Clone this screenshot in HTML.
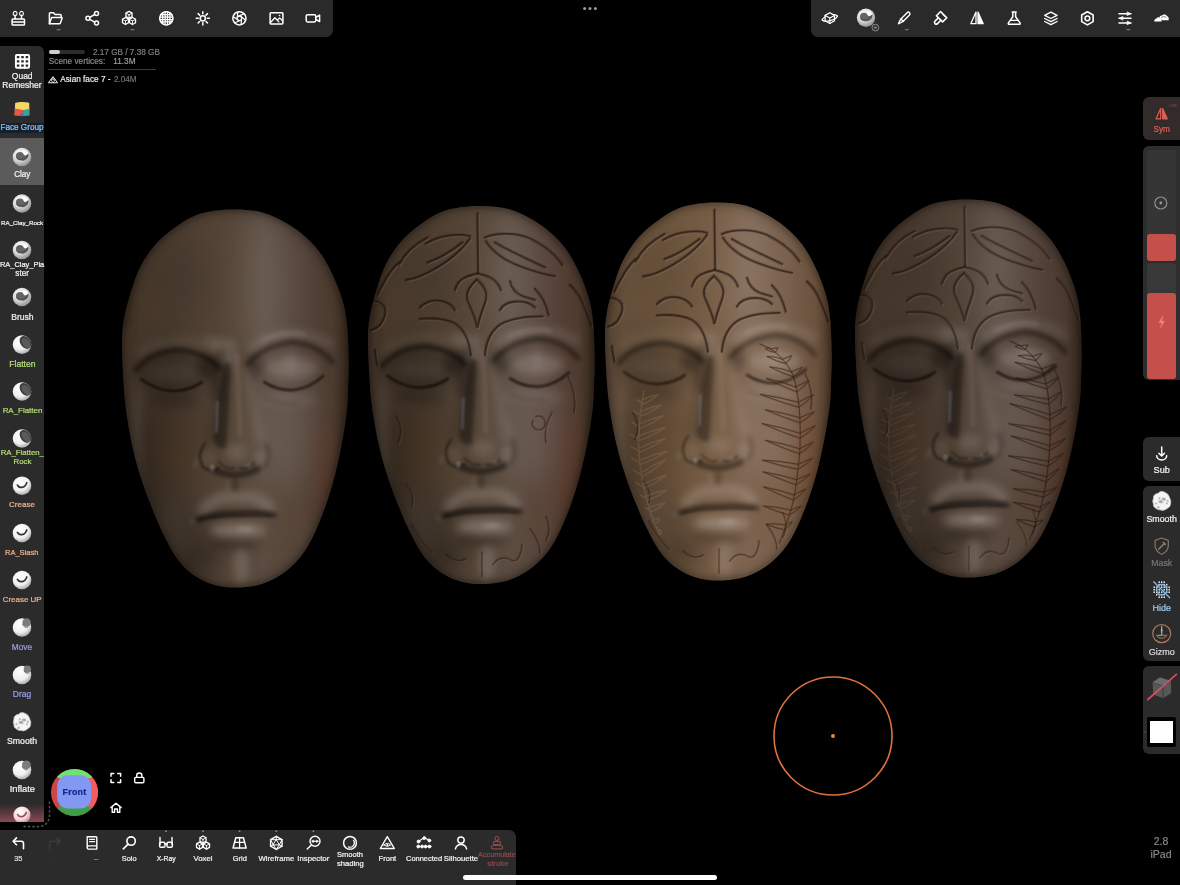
<!DOCTYPE html>
<html><head><meta charset="utf-8"><title>Nomad Sculpt</title>
<style>
html,body{margin:0;padding:0;background:#000;}
body{width:1180px;height:885px;overflow:hidden;position:relative;font-family:"Liberation Sans","DejaVu Sans",sans-serif;color:#fff;}
#scene{position:absolute;left:0;top:0;width:1180px;height:885px;}

.pn{position:absolute;background:#2b2b2b;}
.lb{position:absolute;width:120px;text-align:center;white-space:nowrap;line-height:10px;height:10px;color:#f2f2f2;-webkit-text-stroke:.22px currentColor;}
.tx{position:absolute;white-space:nowrap;line-height:10px;height:10px;-webkit-text-stroke:.15px currentColor;}
#ico{position:absolute;left:0;top:0;width:1180px;height:885px;}

</style></head><body>
<svg id="scene" width="1180" height="885" viewBox="0 0 1180 885">
<defs>
<filter id="b1" color-interpolation-filters="sRGB" filterUnits="userSpaceOnUse" x="90" y="180" width="290" height="440"><feGaussianBlur stdDeviation="1"/></filter>
<filter id="b2" color-interpolation-filters="sRGB" filterUnits="userSpaceOnUse" x="90" y="180" width="290" height="440"><feGaussianBlur stdDeviation="2"/></filter>
<filter id="b4" color-interpolation-filters="sRGB" filterUnits="userSpaceOnUse" x="90" y="180" width="290" height="440"><feGaussianBlur stdDeviation="4"/></filter>
<filter id="b8" color-interpolation-filters="sRGB" filterUnits="userSpaceOnUse" x="90" y="180" width="290" height="440"><feGaussianBlur stdDeviation="8"/></filter>
<filter id="b16" color-interpolation-filters="sRGB" filterUnits="userSpaceOnUse" x="90" y="180" width="290" height="440"><feGaussianBlur stdDeviation="16"/></filter>
<path id="fo" d="M232.5,209.5C242.9,209.3 253.3,210.1 262.5,212.5C271.7,214.9 280.0,219.4 287.5,223.8C295.0,228.1 301.7,233.3 307.5,238.8C313.3,244.2 317.9,249.4 322.5,256.2C327.1,263.1 331.5,271.9 335.0,280.0C338.5,288.1 341.7,296.7 343.8,305.0C345.8,313.3 346.7,320.0 347.5,330.0C348.3,340.0 348.7,355.0 348.8,365.0C348.8,375.0 348.3,382.5 348.0,390.0C347.7,397.5 347.9,401.7 347.0,410.0C346.1,418.3 344.5,429.2 342.5,440.0C340.5,450.8 337.9,463.8 335.0,475.0C332.1,486.2 328.8,497.1 325.0,507.5C321.2,517.9 316.7,529.2 312.5,537.5C308.3,545.8 305.0,551.5 300.0,557.5C295.0,563.5 288.8,569.4 282.5,573.8C276.2,578.1 269.6,581.5 262.5,583.8C255.4,586.0 247.5,587.2 240.0,587.5C232.5,587.8 224.6,587.4 217.5,585.8C210.4,584.1 203.8,581.4 197.5,577.5C191.2,573.6 185.2,568.8 180.0,562.5C174.8,556.2 170.6,548.3 166.2,540.0C161.9,531.7 157.7,522.1 153.8,512.5C149.8,502.9 145.8,492.5 142.5,482.5C139.2,472.5 136.2,462.9 133.8,452.5C131.2,442.1 129.1,430.4 127.5,420.0C125.9,409.6 124.9,402.5 124.0,390.0C123.1,377.5 122.0,356.7 122.0,345.0C122.0,333.3 122.4,328.3 123.8,320.0C125.1,311.7 127.3,303.8 130.0,295.0C132.7,286.2 135.8,275.8 140.0,267.5C144.2,259.2 149.2,251.7 155.0,245.0C160.8,238.3 167.5,232.7 175.0,227.5C182.5,222.3 190.4,216.8 200.0,213.8C209.6,210.8 222.1,209.7 232.5,209.5Z"/>
<clipPath id="fc"><use href="#fo"/></clipPath>
<linearGradient id="g1" gradientUnits="userSpaceOnUse" x1="122" y1="0" x2="349" y2="0"><stop offset="0" stop-color="#3b2d21"/><stop offset="0.08" stop-color="#47382b"/><stop offset="0.3" stop-color="#4e3f32"/><stop offset="0.5" stop-color="#574739"/><stop offset="0.62" stop-color="#5b4c41"/><stop offset="0.8" stop-color="#54443a"/><stop offset="0.93" stop-color="#4b3a2e"/><stop offset="1" stop-color="#3a2b20"/></linearGradient>
<linearGradient id="g2" gradientUnits="userSpaceOnUse" x1="122" y1="0" x2="349" y2="0"><stop offset="0" stop-color="#3b2d21"/><stop offset="0.08" stop-color="#493a2c"/><stop offset="0.3" stop-color="#4f4032"/><stop offset="0.5" stop-color="#58483a"/><stop offset="0.62" stop-color="#5c4d42"/><stop offset="0.8" stop-color="#57443a"/><stop offset="0.93" stop-color="#4e3a2e"/><stop offset="1" stop-color="#3a2b20"/></linearGradient>
<linearGradient id="g3" gradientUnits="userSpaceOnUse" x1="122" y1="0" x2="349" y2="0"><stop offset="0" stop-color="#544130"/><stop offset="0.08" stop-color="#66503b"/><stop offset="0.3" stop-color="#6f573f"/><stop offset="0.5" stop-color="#785f48"/><stop offset="0.62" stop-color="#7e6551"/><stop offset="0.8" stop-color="#78604c"/><stop offset="0.93" stop-color="#6b523d"/><stop offset="1" stop-color="#4e3a2a"/></linearGradient>
<linearGradient id="g4" gradientUnits="userSpaceOnUse" x1="122" y1="0" x2="349" y2="0"><stop offset="0" stop-color="#382a20"/><stop offset="0.08" stop-color="#46372b"/><stop offset="0.3" stop-color="#4b3c31"/><stop offset="0.5" stop-color="#544539"/><stop offset="0.62" stop-color="#594a40"/><stop offset="0.8" stop-color="#534339"/><stop offset="0.93" stop-color="#49392e"/><stop offset="1" stop-color="#37291f"/></linearGradient>
</defs>
<g transform="translate(0,0)"><g clip-path="url(#fc)">
<rect x="110" y="200" width="250" height="400" fill="url(#g1)"/>
<g filter="url(#b16)"><ellipse cx="266" cy="285" rx="20" ry="75" fill="#fff" opacity="0.105"/><ellipse cx="286" cy="430" rx="30" ry="60" fill="#fff" opacity="0.09"/><ellipse cx="165" cy="440" rx="30" ry="110" fill="#000" opacity="0.2"/><ellipse cx="180" cy="280" rx="30" ry="40" fill="#000" opacity="0.08"/><ellipse cx="188" cy="548" rx="36" ry="34" fill="#000" opacity="0.22"/><ellipse cx="176" cy="450" rx="18" ry="42" fill="#7a4210" opacity="0.1"/><ellipse cx="290" cy="520" rx="22" ry="40" fill="#7a4210" opacity="0.07"/></g>
<g filter="url(#b8)"><ellipse cx="148" cy="475" rx="12" ry="60" fill="#000" opacity="0.14"/><ellipse cx="176" cy="374" rx="40" ry="22" fill="#000" opacity="0.16"/><ellipse cx="200" cy="560" rx="18" ry="14" fill="#000" opacity="0.15"/><ellipse cx="325" cy="470" rx="12" ry="50" fill="#7a2a10" opacity="0.14"/><ellipse cx="172" cy="530" rx="14" ry="30" fill="#889" opacity="0.06"/></g>
<g filter="url(#b4)"><path d="M124,330 Q124,400 134,455 Q144,500 160,530" fill="none" stroke="#fff" stroke-width="7" stroke-linecap="round" stroke-linejoin="round" opacity="0.07"/><use href="#fo" fill="none" stroke="#000" stroke-width="9" opacity="0.22"/><path d="M140,352 Q175,332 214,348" fill="none" stroke="#fff" stroke-width="9" stroke-linecap="round" stroke-linejoin="round" opacity="0.06"/><path d="M252,346 Q292,322 330,344" fill="none" stroke="#fff" stroke-width="9" stroke-linecap="round" stroke-linejoin="round" opacity="0.1"/><path d="M203,336 L236,340 L232,372 Z" fill="#fff" opacity="0.13"/><ellipse cx="208" cy="366" rx="10" ry="12" fill="#000" opacity="0.35"/><ellipse cx="254" cy="366" rx="8" ry="12" fill="#000" opacity="0.28"/><ellipse cx="291" cy="362" rx="6" ry="12" fill="#fff" opacity="0.09"/><path d="M222,352 Q214,372 216,396" fill="none" stroke="#000" stroke-width="9" stroke-linecap="round" stroke-linejoin="round" opacity="0.3"/><ellipse cx="174" cy="373" rx="24" ry="9" fill="#fff" opacity="0.05"/><ellipse cx="292" cy="368" rx="26" ry="11" fill="#fff" opacity="0.16"/><ellipse cx="172" cy="401" rx="26" ry="6" fill="#000" opacity="0.12"/><ellipse cx="288" cy="400" rx="30" ry="7" fill="#fff" opacity="0.07"/><path d="M221,372 Q214,410 208,440" fill="none" stroke="#000" stroke-width="8" stroke-linecap="round" stroke-linejoin="round" opacity="0.16"/><path d="M247,372 Q253,410 262,440" fill="none" stroke="#fff" stroke-width="9" stroke-linecap="round" stroke-linejoin="round" opacity="0.08"/><ellipse cx="236" cy="452" rx="11" ry="9" fill="#fff" opacity="0.11"/><path d="M203,510 Q218,494 236,498 Q256,493 270,508" fill="none" stroke="#fff" stroke-width="11" stroke-linecap="round" stroke-linejoin="round" opacity="0.17"/><ellipse cx="238" cy="530" rx="28" ry="6.5" fill="#fff" opacity="0.24"/><ellipse cx="236" cy="545" rx="26" ry="4" fill="#000" opacity="0.28"/><ellipse cx="241" cy="566" rx="8" ry="18" fill="#fff" opacity="0.14"/><ellipse cx="137" cy="440" rx="5" ry="60" fill="#fff" opacity="0.05"/></g>
<g filter="url(#b2)"><use href="#fo" fill="none" stroke="#000" stroke-width="3" opacity="0.3"/><path d="M136,370 Q150,352 178,350 Q204,352 219,368" fill="none" stroke="#000" stroke-width="5" stroke-linecap="round" stroke-linejoin="round" opacity="0.5"/><path d="M248,364 Q262,346 292,342 Q318,344 332,362" fill="none" stroke="#000" stroke-width="5" stroke-linecap="round" stroke-linejoin="round" opacity="0.42"/><path d="M262,340.5 Q284,330 305,334.5" fill="none" stroke="#fff" stroke-width="2.6" stroke-linecap="round" stroke-linejoin="round" opacity="0.15"/><path d="M264,398 Q280,405 298,403" fill="none" stroke="#000" stroke-width="2.5" stroke-linecap="round" stroke-linejoin="round" opacity="0.18"/><path d="M224,362 Q217,400 213,440 Q216,450 226,448 Q229,410 231,364 Z" fill="#000" opacity="0.42"/><path d="M237,354 Q239,400 240,436" fill="none" stroke="#fff" stroke-width="3" stroke-linecap="round" stroke-linejoin="round" opacity="0.13"/><ellipse cx="208" cy="458" rx="7" ry="8" fill="#fff" opacity="0.05"/><ellipse cx="260" cy="457" rx="6" ry="8" fill="#fff" opacity="0.07"/><path d="M266,443 Q272,457 265,467" fill="none" stroke="#000" stroke-width="2.5" stroke-linecap="round" stroke-linejoin="round" opacity="0.28"/><path d="M214,470 Q236,480 258,469" fill="none" stroke="#000" stroke-width="6" stroke-linecap="round" stroke-linejoin="round" opacity="0.5"/><ellipse cx="235" cy="485" rx="4" ry="7" fill="#000" opacity="0.22"/><ellipse cx="228" cy="486" rx="3" ry="6" fill="#fff" opacity="0.05"/><path d="M195,520.5 Q214,513 235,513.5 Q258,511.5 274,515" fill="none" stroke="#000" stroke-width="5" stroke-linecap="round" stroke-linejoin="round" opacity="0.58"/><ellipse cx="245" cy="529" rx="9" ry="3" fill="#fff" opacity="0.12"/><ellipse cx="193.5" cy="521" rx="3" ry="2.4" fill="#fff" opacity="0.16"/><ellipse cx="196" cy="463" rx="2" ry="5" fill="#fff" opacity="0.1" transform="rotate(20 196 463)"/></g>
<g filter="url(#b1)"><path d="M141,379 Q158,392 176,391 Q191,390 202,382" fill="none" stroke="#000" stroke-width="2.2" stroke-linecap="round" stroke-linejoin="round" opacity="0.75"/><path d="M264,382 Q278,391 294,390 Q310,388 323,376" fill="none" stroke="#000" stroke-width="2.2" stroke-linecap="round" stroke-linejoin="round" opacity="0.75"/><path d="M217.5,402 L216.5,432" fill="none" stroke="#93a4cc" stroke-width="2.2" stroke-linecap="round" stroke-linejoin="round" opacity="0.32"/><path d="M205,443 Q196,455 203,467 Q210,473 219,468" fill="none" stroke="#000" stroke-width="2.2" stroke-linecap="round" stroke-linejoin="round" opacity="0.42"/><path d="M219,462 Q226,470 234,468 M240,468 Q248,470 254,463" fill="none" stroke="#000" stroke-width="2.5" stroke-linecap="round" stroke-linejoin="round" opacity="0.35"/><ellipse cx="212.5" cy="468" rx="2.4" ry="3.4" fill="#fff" opacity="0.22"/><ellipse cx="249" cy="466" rx="2.4" ry="2.6" fill="#fff" opacity="0.1"/><path d="M199,520 Q216,516 235,516 Q256,515 270,516" fill="none" stroke="#000" stroke-width="2" stroke-linecap="round" stroke-linejoin="round" opacity="0.35"/></g>
</g></g>
<g transform="translate(246,-3.5)"><g clip-path="url(#fc)">
<rect x="110" y="200" width="250" height="400" fill="url(#g2)"/>
<g filter="url(#b16)"><ellipse cx="266" cy="285" rx="20" ry="75" fill="#fff" opacity="0.105"/><ellipse cx="286" cy="430" rx="30" ry="60" fill="#fff" opacity="0.09"/><ellipse cx="165" cy="440" rx="30" ry="110" fill="#000" opacity="0.2"/><ellipse cx="180" cy="280" rx="30" ry="40" fill="#000" opacity="0.08"/><ellipse cx="188" cy="548" rx="36" ry="34" fill="#000" opacity="0.22"/><ellipse cx="176" cy="450" rx="18" ry="42" fill="#7a4210" opacity="0.1"/><ellipse cx="290" cy="520" rx="22" ry="40" fill="#7a4210" opacity="0.07"/></g>
<g filter="url(#b8)"><ellipse cx="148" cy="475" rx="12" ry="60" fill="#000" opacity="0.14"/><ellipse cx="176" cy="374" rx="40" ry="22" fill="#000" opacity="0.16"/><ellipse cx="200" cy="560" rx="18" ry="14" fill="#000" opacity="0.15"/><ellipse cx="325" cy="470" rx="12" ry="50" fill="#7a2a10" opacity="0.14"/><ellipse cx="172" cy="530" rx="14" ry="30" fill="#889" opacity="0.06"/></g>
<g filter="url(#b4)"><path d="M124,330 Q124,400 134,455 Q144,500 160,530" fill="none" stroke="#fff" stroke-width="7" stroke-linecap="round" stroke-linejoin="round" opacity="0.07"/><use href="#fo" fill="none" stroke="#000" stroke-width="9" opacity="0.22"/><path d="M140,352 Q175,332 214,348" fill="none" stroke="#fff" stroke-width="9" stroke-linecap="round" stroke-linejoin="round" opacity="0.06"/><path d="M252,346 Q292,322 330,344" fill="none" stroke="#fff" stroke-width="9" stroke-linecap="round" stroke-linejoin="round" opacity="0.1"/><path d="M203,336 L236,340 L232,372 Z" fill="#fff" opacity="0.13"/><ellipse cx="208" cy="366" rx="10" ry="12" fill="#000" opacity="0.35"/><ellipse cx="254" cy="366" rx="8" ry="12" fill="#000" opacity="0.28"/><ellipse cx="291" cy="362" rx="6" ry="12" fill="#fff" opacity="0.09"/><path d="M222,352 Q214,372 216,396" fill="none" stroke="#000" stroke-width="9" stroke-linecap="round" stroke-linejoin="round" opacity="0.3"/><ellipse cx="174" cy="373" rx="24" ry="9" fill="#fff" opacity="0.05"/><ellipse cx="292" cy="368" rx="26" ry="11" fill="#fff" opacity="0.16"/><ellipse cx="172" cy="401" rx="26" ry="6" fill="#000" opacity="0.12"/><ellipse cx="288" cy="400" rx="30" ry="7" fill="#fff" opacity="0.07"/><path d="M221,372 Q214,410 208,440" fill="none" stroke="#000" stroke-width="8" stroke-linecap="round" stroke-linejoin="round" opacity="0.16"/><path d="M247,372 Q253,410 262,440" fill="none" stroke="#fff" stroke-width="9" stroke-linecap="round" stroke-linejoin="round" opacity="0.08"/><ellipse cx="236" cy="452" rx="11" ry="9" fill="#fff" opacity="0.11"/><path d="M203,510 Q218,494 236,498 Q256,493 270,508" fill="none" stroke="#fff" stroke-width="11" stroke-linecap="round" stroke-linejoin="round" opacity="0.17"/><ellipse cx="238" cy="530" rx="28" ry="6.5" fill="#fff" opacity="0.24"/><ellipse cx="236" cy="545" rx="26" ry="4" fill="#000" opacity="0.28"/><ellipse cx="241" cy="566" rx="8" ry="18" fill="#fff" opacity="0.14"/><ellipse cx="137" cy="440" rx="5" ry="60" fill="#fff" opacity="0.05"/></g>
<g filter="url(#b2)"><use href="#fo" fill="none" stroke="#000" stroke-width="3" opacity="0.3"/><path d="M136,370 Q150,352 178,350 Q204,352 219,368" fill="none" stroke="#000" stroke-width="5" stroke-linecap="round" stroke-linejoin="round" opacity="0.5"/><path d="M248,364 Q262,346 292,342 Q318,344 332,362" fill="none" stroke="#000" stroke-width="5" stroke-linecap="round" stroke-linejoin="round" opacity="0.42"/><path d="M262,340.5 Q284,330 305,334.5" fill="none" stroke="#fff" stroke-width="2.6" stroke-linecap="round" stroke-linejoin="round" opacity="0.15"/><path d="M264,398 Q280,405 298,403" fill="none" stroke="#000" stroke-width="2.5" stroke-linecap="round" stroke-linejoin="round" opacity="0.18"/><path d="M224,362 Q217,400 213,440 Q216,450 226,448 Q229,410 231,364 Z" fill="#000" opacity="0.42"/><path d="M237,354 Q239,400 240,436" fill="none" stroke="#fff" stroke-width="3" stroke-linecap="round" stroke-linejoin="round" opacity="0.13"/><ellipse cx="208" cy="458" rx="7" ry="8" fill="#fff" opacity="0.05"/><ellipse cx="260" cy="457" rx="6" ry="8" fill="#fff" opacity="0.07"/><path d="M266,443 Q272,457 265,467" fill="none" stroke="#000" stroke-width="2.5" stroke-linecap="round" stroke-linejoin="round" opacity="0.28"/><path d="M214,470 Q236,480 258,469" fill="none" stroke="#000" stroke-width="6" stroke-linecap="round" stroke-linejoin="round" opacity="0.5"/><ellipse cx="235" cy="485" rx="4" ry="7" fill="#000" opacity="0.22"/><ellipse cx="228" cy="486" rx="3" ry="6" fill="#fff" opacity="0.05"/><path d="M195,520.5 Q214,513 235,513.5 Q258,511.5 274,515" fill="none" stroke="#000" stroke-width="5" stroke-linecap="round" stroke-linejoin="round" opacity="0.58"/><ellipse cx="245" cy="529" rx="9" ry="3" fill="#fff" opacity="0.12"/><ellipse cx="193.5" cy="521" rx="3" ry="2.4" fill="#fff" opacity="0.16"/><ellipse cx="196" cy="463" rx="2" ry="5" fill="#fff" opacity="0.1" transform="rotate(20 196 463)"/></g>
<g filter="url(#b1)"><path d="M141,379 Q158,392 176,391 Q191,390 202,382" fill="none" stroke="#000" stroke-width="2.2" stroke-linecap="round" stroke-linejoin="round" opacity="0.75"/><path d="M264,382 Q278,391 294,390 Q310,388 323,376" fill="none" stroke="#000" stroke-width="2.2" stroke-linecap="round" stroke-linejoin="round" opacity="0.75"/><path d="M217.5,402 L216.5,432" fill="none" stroke="#93a4cc" stroke-width="2.2" stroke-linecap="round" stroke-linejoin="round" opacity="0.32"/><path d="M205,443 Q196,455 203,467 Q210,473 219,468" fill="none" stroke="#000" stroke-width="2.2" stroke-linecap="round" stroke-linejoin="round" opacity="0.42"/><path d="M219,462 Q226,470 234,468 M240,468 Q248,470 254,463" fill="none" stroke="#000" stroke-width="2.5" stroke-linecap="round" stroke-linejoin="round" opacity="0.35"/><ellipse cx="212.5" cy="468" rx="2.4" ry="3.4" fill="#fff" opacity="0.22"/><ellipse cx="249" cy="466" rx="2.4" ry="2.6" fill="#fff" opacity="0.1"/><path d="M199,520 Q216,516 235,516 Q256,515 270,516" fill="none" stroke="#000" stroke-width="2" stroke-linecap="round" stroke-linejoin="round" opacity="0.35"/></g>
<path d="M231.5,217 L232.2,276" fill="none" stroke="#fff" stroke-width="1.8" opacity="0.1" transform="translate(1.3,1.3)" stroke-linecap="round"/><path d="M231.5,217 L232.2,276" fill="none" stroke="#1a0d05" stroke-width="3.78" opacity="0.193" stroke-linecap="round"/><path d="M231.5,217 L232.2,276" fill="none" stroke="#1a0d05" stroke-width="1.8" opacity="0.55" stroke-linecap="round"/>
<path d="M231,283 C224,289 219.5,296 221.5,303 C224,311 229,318 231.5,331 C234,318 238,311 240,303 C242,296 238,289 231,283 Z" fill="none" stroke="#fff" stroke-width="1.8" opacity="0.1" transform="translate(1.3,1.3)" stroke-linecap="round"/><path d="M231,283 C224,289 219.5,296 221.5,303 C224,311 229,318 231.5,331 C234,318 238,311 240,303 C242,296 238,289 231,283 Z" fill="none" stroke="#1a0d05" stroke-width="3.78" opacity="0.193" stroke-linecap="round"/><path d="M231,283 C224,289 219.5,296 221.5,303 C224,311 229,318 231.5,331 C234,318 238,311 240,303 C242,296 238,289 231,283 Z" fill="none" stroke="#1a0d05" stroke-width="1.8" opacity="0.55" stroke-linecap="round"/>
<path d="M209,293.5 C211,287 214,283.5 218,281.5 C223,279 227,278 231.5,277 C236,278 240,279 245,281.5 C249,283.5 253,288 255,293.5" fill="none" stroke="#fff" stroke-width="1.8" opacity="0.1" transform="translate(1.3,1.3)" stroke-linecap="round"/><path d="M209,293.5 C211,287 214,283.5 218,281.5 C223,279 227,278 231.5,277 C236,278 240,279 245,281.5 C249,283.5 253,288 255,293.5" fill="none" stroke="#1a0d05" stroke-width="3.78" opacity="0.193" stroke-linecap="round"/><path d="M209,293.5 C211,287 214,283.5 218,281.5 C223,279 227,278 231.5,277 C236,278 240,279 245,281.5 C249,283.5 253,288 255,293.5" fill="none" stroke="#1a0d05" stroke-width="1.8" opacity="0.55" stroke-linecap="round"/>
<path d="M224,239.8 C216,237.5 196,237 180,247" fill="none" stroke="#fff" stroke-width="1.8" opacity="0.1" transform="translate(1.3,1.3)" stroke-linecap="round"/><path d="M224,239.8 C216,237.5 196,237 180,247" fill="none" stroke="#1a0d05" stroke-width="3.78" opacity="0.193" stroke-linecap="round"/><path d="M224,239.8 C216,237.5 196,237 180,247" fill="none" stroke="#1a0d05" stroke-width="1.8" opacity="0.55" stroke-linecap="round"/>
<path d="M224,242 C214,256 196,270 174,279.8 C169,282 164,283 160,283.5" fill="none" stroke="#fff" stroke-width="1.8" opacity="0.1" transform="translate(1.3,1.3)" stroke-linecap="round"/><path d="M224,242 C214,256 196,270 174,279.8 C169,282 164,283 160,283.5" fill="none" stroke="#1a0d05" stroke-width="3.78" opacity="0.193" stroke-linecap="round"/><path d="M224,242 C214,256 196,270 174,279.8 C169,282 164,283 160,283.5" fill="none" stroke="#1a0d05" stroke-width="1.8" opacity="0.55" stroke-linecap="round"/>
<path d="M216.5,246 C206,254 194,262 181.5,266" fill="none" stroke="#fff" stroke-width="1.8" opacity="0.1" transform="translate(1.3,1.3)" stroke-linecap="round"/><path d="M216.5,246 C206,254 194,262 181.5,266" fill="none" stroke="#1a0d05" stroke-width="3.78" opacity="0.193" stroke-linecap="round"/><path d="M216.5,246 C206,254 194,262 181.5,266" fill="none" stroke="#1a0d05" stroke-width="1.8" opacity="0.55" stroke-linecap="round"/>
<path d="M181.5,241 C168,248 158,258 152.8,268.5" fill="none" stroke="#fff" stroke-width="1.8" opacity="0.1" transform="translate(1.3,1.3)" stroke-linecap="round"/><path d="M181.5,241 C168,248 158,258 152.8,268.5" fill="none" stroke="#1a0d05" stroke-width="3.78" opacity="0.193" stroke-linecap="round"/><path d="M181.5,241 C168,248 158,258 152.8,268.5" fill="none" stroke="#1a0d05" stroke-width="1.8" opacity="0.55" stroke-linecap="round"/>
<path d="M239,241 C250,236 270,236 284,242 C296,248 310,258 316.5,268.5" fill="none" stroke="#fff" stroke-width="1.8" opacity="0.1" transform="translate(1.3,1.3)" stroke-linecap="round"/><path d="M239,241 C250,236 270,236 284,242 C296,248 310,258 316.5,268.5" fill="none" stroke="#1a0d05" stroke-width="3.78" opacity="0.193" stroke-linecap="round"/><path d="M239,241 C250,236 270,236 284,242 C296,248 310,258 316.5,268.5" fill="none" stroke="#1a0d05" stroke-width="1.8" opacity="0.55" stroke-linecap="round"/>
<path d="M240,244.8 C246,254 258,264 274,269.8 C288,275 300,278.5 309,279.8" fill="none" stroke="#fff" stroke-width="1.8" opacity="0.1" transform="translate(1.3,1.3)" stroke-linecap="round"/><path d="M240,244.8 C246,254 258,264 274,269.8 C288,275 300,278.5 309,279.8" fill="none" stroke="#1a0d05" stroke-width="3.78" opacity="0.193" stroke-linecap="round"/><path d="M240,244.8 C246,254 258,264 274,269.8 C288,275 300,278.5 309,279.8" fill="none" stroke="#1a0d05" stroke-width="1.8" opacity="0.55" stroke-linecap="round"/>
<path d="M249,246 C258,252 276,260 299,271" fill="none" stroke="#fff" stroke-width="1.8" opacity="0.1" transform="translate(1.3,1.3)" stroke-linecap="round"/><path d="M249,246 C258,252 276,260 299,271" fill="none" stroke="#1a0d05" stroke-width="3.78" opacity="0.193" stroke-linecap="round"/><path d="M249,246 C258,252 276,260 299,271" fill="none" stroke="#1a0d05" stroke-width="1.8" opacity="0.55" stroke-linecap="round"/>
<path d="M174,311 C178,306 186,303 195,304.5 C202,306 207,309.5 209,313.5" fill="none" stroke="#fff" stroke-width="1.8" opacity="0.1" transform="translate(1.3,1.3)" stroke-linecap="round"/><path d="M174,311 C178,306 186,303 195,304.5 C202,306 207,309.5 209,313.5" fill="none" stroke="#1a0d05" stroke-width="3.78" opacity="0.193" stroke-linecap="round"/><path d="M174,311 C178,306 186,303 195,304.5 C202,306 207,309.5 209,313.5" fill="none" stroke="#1a0d05" stroke-width="1.8" opacity="0.55" stroke-linecap="round"/>
<path d="M254,313.5 C257,308 264,305 272,305 C280,305 286,308 289,311" fill="none" stroke="#fff" stroke-width="1.8" opacity="0.1" transform="translate(1.3,1.3)" stroke-linecap="round"/><path d="M254,313.5 C257,308 264,305 272,305 C280,305 286,308 289,311" fill="none" stroke="#1a0d05" stroke-width="3.78" opacity="0.193" stroke-linecap="round"/><path d="M254,313.5 C257,308 264,305 272,305 C280,305 286,308 289,311" fill="none" stroke="#1a0d05" stroke-width="1.8" opacity="0.55" stroke-linecap="round"/>
<path d="M174,322.3 C186,321.5 200,322.5 209,327 C218,332.5 223,342 225,358.5" fill="none" stroke="#fff" stroke-width="1.8" opacity="0.1" transform="translate(1.3,1.3)" stroke-linecap="round"/><path d="M174,322.3 C186,321.5 200,322.5 209,327 C218,332.5 223,342 225,358.5" fill="none" stroke="#1a0d05" stroke-width="3.78" opacity="0.193" stroke-linecap="round"/><path d="M174,322.3 C186,321.5 200,322.5 209,327 C218,332.5 223,342 225,358.5" fill="none" stroke="#1a0d05" stroke-width="1.8" opacity="0.55" stroke-linecap="round"/>
<path d="M239,358.5 C240,345 245,334 255,327.5 C266,321.5 282,319.8 296.5,319.8" fill="none" stroke="#fff" stroke-width="1.8" opacity="0.1" transform="translate(1.3,1.3)" stroke-linecap="round"/><path d="M239,358.5 C240,345 245,334 255,327.5 C266,321.5 282,319.8 296.5,319.8" fill="none" stroke="#1a0d05" stroke-width="3.78" opacity="0.193" stroke-linecap="round"/><path d="M239,358.5 C240,345 245,334 255,327.5 C266,321.5 282,319.8 296.5,319.8" fill="none" stroke="#1a0d05" stroke-width="1.8" opacity="0.55" stroke-linecap="round"/>
<path d="M264,284.8 C266,292 270,297 276,299.5 C281,301.5 286,302.5 289,303.5" fill="none" stroke="#fff" stroke-width="1.8" opacity="0.1" transform="translate(1.3,1.3)" stroke-linecap="round"/><path d="M264,284.8 C266,292 270,297 276,299.5 C281,301.5 286,302.5 289,303.5" fill="none" stroke="#1a0d05" stroke-width="3.78" opacity="0.193" stroke-linecap="round"/><path d="M264,284.8 C266,292 270,297 276,299.5 C281,301.5 286,302.5 289,303.5" fill="none" stroke="#1a0d05" stroke-width="1.8" opacity="0.55" stroke-linecap="round"/>
<path d="M289,292.3 C295,298 300,306 302.8,318.5" fill="none" stroke="#fff" stroke-width="1.8" opacity="0.1" transform="translate(1.3,1.3)" stroke-linecap="round"/><path d="M289,292.3 C295,298 300,306 302.8,318.5" fill="none" stroke="#1a0d05" stroke-width="3.78" opacity="0.193" stroke-linecap="round"/><path d="M289,292.3 C295,298 300,306 302.8,318.5" fill="none" stroke="#1a0d05" stroke-width="1.8" opacity="0.55" stroke-linecap="round"/>
<path d="M152.8,266 C147,271 142,278 138,286 C135,291 133,295 131.5,298.5" fill="none" stroke="#fff" stroke-width="1.8" opacity="0.1" transform="translate(1.3,1.3)" stroke-linecap="round"/><path d="M152.8,266 C147,271 142,278 138,286 C135,291 133,295 131.5,298.5" fill="none" stroke="#1a0d05" stroke-width="3.78" opacity="0.193" stroke-linecap="round"/><path d="M152.8,266 C147,271 142,278 138,286 C135,291 133,295 131.5,298.5" fill="none" stroke="#1a0d05" stroke-width="1.8" opacity="0.55" stroke-linecap="round"/>
<path d="M126.5,304.8 C132,305 137,307.5 139,311 C140.5,317 138,323 134,328.5 C131,331.5 128,333 125.3,333.5" fill="none" stroke="#fff" stroke-width="1.8" opacity="0.1" transform="translate(1.3,1.3)" stroke-linecap="round"/><path d="M126.5,304.8 C132,305 137,307.5 139,311 C140.5,317 138,323 134,328.5 C131,331.5 128,333 125.3,333.5" fill="none" stroke="#1a0d05" stroke-width="3.78" opacity="0.193" stroke-linecap="round"/><path d="M126.5,304.8 C132,305 137,307.5 139,311 C140.5,317 138,323 134,328.5 C131,331.5 128,333 125.3,333.5" fill="none" stroke="#1a0d05" stroke-width="1.8" opacity="0.55" stroke-linecap="round"/>
<path d="M324,288.5 C330,294 334,300 336.5,306 C340,314 343,321 345.3,328.5" fill="none" stroke="#fff" stroke-width="1.8" opacity="0.1" transform="translate(1.3,1.3)" stroke-linecap="round"/><path d="M324,288.5 C330,294 334,300 336.5,306 C340,314 343,321 345.3,328.5" fill="none" stroke="#1a0d05" stroke-width="3.78" opacity="0.193" stroke-linecap="round"/><path d="M324,288.5 C330,294 334,300 336.5,306 C340,314 343,321 345.3,328.5" fill="none" stroke="#1a0d05" stroke-width="1.8" opacity="0.55" stroke-linecap="round"/>
<path d="M129,353.5 C129.5,359 130.5,364 131.5,368.5" fill="none" stroke="#fff" stroke-width="1.8" opacity="0.1" transform="translate(1.3,1.3)" stroke-linecap="round"/><path d="M129,353.5 C129.5,359 130.5,364 131.5,368.5" fill="none" stroke="#1a0d05" stroke-width="3.78" opacity="0.193" stroke-linecap="round"/><path d="M129,353.5 C129.5,359 130.5,364 131.5,368.5" fill="none" stroke="#1a0d05" stroke-width="1.8" opacity="0.55" stroke-linecap="round"/>
<path d="M290,420 C298,418 302,426 297,432 C291,436 284,430 287,424" fill="none" stroke="#fff" stroke-width="1.3" opacity="0.06" transform="translate(1.3,1.3)" stroke-linecap="round"/><path d="M290,420 C298,418 302,426 297,432 C291,436 284,430 287,424" fill="none" stroke="#1a0d05" stroke-width="2.73" opacity="0.115" stroke-linecap="round"/><path d="M290,420 C298,418 302,426 297,432 C291,436 284,430 287,424" fill="none" stroke="#1a0d05" stroke-width="1.3" opacity="0.33" stroke-linecap="round"/>
<path d="M306,416 C300,426 298,436 300,446" fill="none" stroke="#fff" stroke-width="1.3" opacity="0.06" transform="translate(1.3,1.3)" stroke-linecap="round"/><path d="M306,416 C300,426 298,436 300,446" fill="none" stroke="#1a0d05" stroke-width="2.73" opacity="0.115" stroke-linecap="round"/><path d="M306,416 C300,426 298,436 300,446" fill="none" stroke="#1a0d05" stroke-width="1.3" opacity="0.33" stroke-linecap="round"/>
<path d="M236,556 L236,580" fill="none" stroke="#fff" stroke-width="1.3" opacity="0.06" transform="translate(1.3,1.3)" stroke-linecap="round"/><path d="M236,556 L236,580" fill="none" stroke="#1a0d05" stroke-width="2.73" opacity="0.115" stroke-linecap="round"/><path d="M236,556 L236,580" fill="none" stroke="#1a0d05" stroke-width="1.3" opacity="0.33" stroke-linecap="round"/>
<path d="M247,568 C252,560 260,560 266,564 C272,566 276,556 276,548" fill="none" stroke="#fff" stroke-width="1.3" opacity="0.06" transform="translate(1.3,1.3)" stroke-linecap="round"/><path d="M247,568 C252,560 260,560 266,564 C272,566 276,556 276,548" fill="none" stroke="#1a0d05" stroke-width="2.73" opacity="0.115" stroke-linecap="round"/><path d="M247,568 C252,560 260,560 266,564 C272,566 276,556 276,548" fill="none" stroke="#1a0d05" stroke-width="1.3" opacity="0.33" stroke-linecap="round"/>
<path d="M200,558 C206,564 214,566 220,562" fill="none" stroke="#fff" stroke-width="1.3" opacity="0.06" transform="translate(1.3,1.3)" stroke-linecap="round"/><path d="M200,558 C206,564 214,566 220,562" fill="none" stroke="#1a0d05" stroke-width="2.73" opacity="0.115" stroke-linecap="round"/><path d="M200,558 C206,564 214,566 220,562" fill="none" stroke="#1a0d05" stroke-width="1.3" opacity="0.33" stroke-linecap="round"/>
<path d="M160,488 C166,494 168,502 166,510" fill="none" stroke="#fff" stroke-width="1.3" opacity="0.06" transform="translate(1.3,1.3)" stroke-linecap="round"/><path d="M160,488 C166,494 168,502 166,510" fill="none" stroke="#1a0d05" stroke-width="2.73" opacity="0.115" stroke-linecap="round"/><path d="M160,488 C166,494 168,502 166,510" fill="none" stroke="#1a0d05" stroke-width="1.3" opacity="0.33" stroke-linecap="round"/>
<path d="M166,528 C172,540 180,550 186,556" fill="none" stroke="#fff" stroke-width="1.3" opacity="0.06" transform="translate(1.3,1.3)" stroke-linecap="round"/><path d="M166,528 C172,540 180,550 186,556" fill="none" stroke="#1a0d05" stroke-width="2.73" opacity="0.115" stroke-linecap="round"/><path d="M166,528 C172,540 180,550 186,556" fill="none" stroke="#1a0d05" stroke-width="1.3" opacity="0.33" stroke-linecap="round"/>
<path d="M284,532 C290,540 294,548 294,556" fill="none" stroke="#fff" stroke-width="1.3" opacity="0.06" transform="translate(1.3,1.3)" stroke-linecap="round"/><path d="M284,532 C290,540 294,548 294,556" fill="none" stroke="#1a0d05" stroke-width="2.73" opacity="0.115" stroke-linecap="round"/><path d="M284,532 C290,540 294,548 294,556" fill="none" stroke="#1a0d05" stroke-width="1.3" opacity="0.33" stroke-linecap="round"/>
<path d="M300,520 C304,528 304,536 300,544" fill="none" stroke="#fff" stroke-width="1.3" opacity="0.06" transform="translate(1.3,1.3)" stroke-linecap="round"/><path d="M300,520 C304,528 304,536 300,544" fill="none" stroke="#1a0d05" stroke-width="2.73" opacity="0.115" stroke-linecap="round"/><path d="M300,520 C304,528 304,536 300,544" fill="none" stroke="#1a0d05" stroke-width="1.3" opacity="0.33" stroke-linecap="round"/>
<path d="M150,420 C156,428 156,438 152,446" fill="none" stroke="#fff" stroke-width="1.3" opacity="0.06" transform="translate(1.3,1.3)" stroke-linecap="round"/><path d="M150,420 C156,428 156,438 152,446" fill="none" stroke="#1a0d05" stroke-width="2.73" opacity="0.115" stroke-linecap="round"/><path d="M150,420 C156,428 156,438 152,446" fill="none" stroke="#1a0d05" stroke-width="1.3" opacity="0.33" stroke-linecap="round"/>
<path d="M322,380 C328,392 330,404 328,416" fill="none" stroke="#fff" stroke-width="1.3" opacity="0.06" transform="translate(1.3,1.3)" stroke-linecap="round"/><path d="M322,380 C328,392 330,404 328,416" fill="none" stroke="#1a0d05" stroke-width="2.73" opacity="0.115" stroke-linecap="round"/><path d="M322,380 C328,392 330,404 328,416" fill="none" stroke="#1a0d05" stroke-width="1.3" opacity="0.33" stroke-linecap="round"/>
</g></g>
<g transform="translate(483,-7)"><g clip-path="url(#fc)">
<rect x="110" y="200" width="250" height="400" fill="url(#g3)"/>
<g filter="url(#b16)"><ellipse cx="266" cy="285" rx="20" ry="75" fill="#fff" opacity="0.105"/><ellipse cx="286" cy="430" rx="30" ry="60" fill="#fff" opacity="0.09"/><ellipse cx="165" cy="440" rx="30" ry="110" fill="#000" opacity="0.17"/><ellipse cx="180" cy="280" rx="30" ry="40" fill="#000" opacity="0.068"/><ellipse cx="188" cy="548" rx="36" ry="34" fill="#000" opacity="0.187"/><ellipse cx="176" cy="450" rx="18" ry="42" fill="#7a4210" opacity="0.1"/><ellipse cx="290" cy="520" rx="22" ry="40" fill="#7a4210" opacity="0.07"/></g>
<g filter="url(#b8)"><ellipse cx="148" cy="475" rx="12" ry="60" fill="#000" opacity="0.119"/><ellipse cx="176" cy="374" rx="40" ry="22" fill="#000" opacity="0.136"/><ellipse cx="200" cy="560" rx="18" ry="14" fill="#000" opacity="0.128"/><ellipse cx="325" cy="470" rx="12" ry="50" fill="#7a2a10" opacity="0.14"/><ellipse cx="172" cy="530" rx="14" ry="30" fill="#889" opacity="0.06"/></g>
<g filter="url(#b4)"><path d="M124,330 Q124,400 134,455 Q144,500 160,530" fill="none" stroke="#fff" stroke-width="7" stroke-linecap="round" stroke-linejoin="round" opacity="0.07"/><use href="#fo" fill="none" stroke="#000" stroke-width="9" opacity="0.187"/><path d="M140,352 Q175,332 214,348" fill="none" stroke="#fff" stroke-width="9" stroke-linecap="round" stroke-linejoin="round" opacity="0.06"/><path d="M252,346 Q292,322 330,344" fill="none" stroke="#fff" stroke-width="9" stroke-linecap="round" stroke-linejoin="round" opacity="0.1"/><path d="M203,336 L236,340 L232,372 Z" fill="#fff" opacity="0.13"/><ellipse cx="208" cy="366" rx="10" ry="12" fill="#000" opacity="0.297"/><ellipse cx="254" cy="366" rx="8" ry="12" fill="#000" opacity="0.238"/><ellipse cx="291" cy="362" rx="6" ry="12" fill="#fff" opacity="0.09"/><path d="M222,352 Q214,372 216,396" fill="none" stroke="#000" stroke-width="9" stroke-linecap="round" stroke-linejoin="round" opacity="0.255"/><ellipse cx="174" cy="373" rx="24" ry="9" fill="#fff" opacity="0.05"/><ellipse cx="292" cy="368" rx="26" ry="11" fill="#fff" opacity="0.16"/><ellipse cx="172" cy="401" rx="26" ry="6" fill="#000" opacity="0.102"/><ellipse cx="288" cy="400" rx="30" ry="7" fill="#fff" opacity="0.07"/><path d="M221,372 Q214,410 208,440" fill="none" stroke="#000" stroke-width="8" stroke-linecap="round" stroke-linejoin="round" opacity="0.136"/><path d="M247,372 Q253,410 262,440" fill="none" stroke="#fff" stroke-width="9" stroke-linecap="round" stroke-linejoin="round" opacity="0.08"/><ellipse cx="236" cy="452" rx="11" ry="9" fill="#fff" opacity="0.11"/><path d="M203,510 Q218,494 236,498 Q256,493 270,508" fill="none" stroke="#fff" stroke-width="11" stroke-linecap="round" stroke-linejoin="round" opacity="0.17"/><ellipse cx="238" cy="530" rx="28" ry="6.5" fill="#fff" opacity="0.24"/><ellipse cx="236" cy="545" rx="26" ry="4" fill="#000" opacity="0.238"/><ellipse cx="241" cy="566" rx="8" ry="18" fill="#fff" opacity="0.14"/><ellipse cx="137" cy="440" rx="5" ry="60" fill="#fff" opacity="0.05"/></g>
<g filter="url(#b2)"><use href="#fo" fill="none" stroke="#000" stroke-width="3" opacity="0.255"/><path d="M136,370 Q150,352 178,350 Q204,352 219,368" fill="none" stroke="#000" stroke-width="5" stroke-linecap="round" stroke-linejoin="round" opacity="0.425"/><path d="M248,364 Q262,346 292,342 Q318,344 332,362" fill="none" stroke="#000" stroke-width="5" stroke-linecap="round" stroke-linejoin="round" opacity="0.357"/><path d="M262,340.5 Q284,330 305,334.5" fill="none" stroke="#fff" stroke-width="2.6" stroke-linecap="round" stroke-linejoin="round" opacity="0.15"/><path d="M264,398 Q280,405 298,403" fill="none" stroke="#000" stroke-width="2.5" stroke-linecap="round" stroke-linejoin="round" opacity="0.153"/><path d="M224,362 Q217,400 213,440 Q216,450 226,448 Q229,410 231,364 Z" fill="#000" opacity="0.357"/><path d="M237,354 Q239,400 240,436" fill="none" stroke="#fff" stroke-width="3" stroke-linecap="round" stroke-linejoin="round" opacity="0.13"/><ellipse cx="208" cy="458" rx="7" ry="8" fill="#fff" opacity="0.05"/><ellipse cx="260" cy="457" rx="6" ry="8" fill="#fff" opacity="0.07"/><path d="M266,443 Q272,457 265,467" fill="none" stroke="#000" stroke-width="2.5" stroke-linecap="round" stroke-linejoin="round" opacity="0.238"/><path d="M214,470 Q236,480 258,469" fill="none" stroke="#000" stroke-width="6" stroke-linecap="round" stroke-linejoin="round" opacity="0.425"/><ellipse cx="235" cy="485" rx="4" ry="7" fill="#000" opacity="0.187"/><ellipse cx="228" cy="486" rx="3" ry="6" fill="#fff" opacity="0.05"/><path d="M195,520.5 Q214,513 235,513.5 Q258,511.5 274,515" fill="none" stroke="#000" stroke-width="5" stroke-linecap="round" stroke-linejoin="round" opacity="0.493"/><ellipse cx="245" cy="529" rx="9" ry="3" fill="#fff" opacity="0.12"/><ellipse cx="193.5" cy="521" rx="3" ry="2.4" fill="#fff" opacity="0.16"/><ellipse cx="196" cy="463" rx="2" ry="5" fill="#fff" opacity="0.1" transform="rotate(20 196 463)"/></g>
<g filter="url(#b1)"><path d="M141,379 Q158,392 176,391 Q191,390 202,382" fill="none" stroke="#000" stroke-width="2.2" stroke-linecap="round" stroke-linejoin="round" opacity="0.637"/><path d="M264,382 Q278,391 294,390 Q310,388 323,376" fill="none" stroke="#000" stroke-width="2.2" stroke-linecap="round" stroke-linejoin="round" opacity="0.637"/><path d="M217.5,402 L216.5,432" fill="none" stroke="#93a4cc" stroke-width="2.2" stroke-linecap="round" stroke-linejoin="round" opacity="0.32"/><path d="M205,443 Q196,455 203,467 Q210,473 219,468" fill="none" stroke="#000" stroke-width="2.2" stroke-linecap="round" stroke-linejoin="round" opacity="0.357"/><path d="M219,462 Q226,470 234,468 M240,468 Q248,470 254,463" fill="none" stroke="#000" stroke-width="2.5" stroke-linecap="round" stroke-linejoin="round" opacity="0.297"/><ellipse cx="212.5" cy="468" rx="2.4" ry="3.4" fill="#fff" opacity="0.22"/><ellipse cx="249" cy="466" rx="2.4" ry="2.6" fill="#fff" opacity="0.1"/><path d="M199,520 Q216,516 235,516 Q256,515 270,516" fill="none" stroke="#000" stroke-width="2" stroke-linecap="round" stroke-linejoin="round" opacity="0.297"/></g>
<path d="M231.5,217 L232.2,276" fill="none" stroke="#fff" stroke-width="1.8" opacity="0.1" transform="translate(1.3,1.3)" stroke-linecap="round"/><path d="M231.5,217 L232.2,276" fill="none" stroke="#1a0d05" stroke-width="3.78" opacity="0.193" stroke-linecap="round"/><path d="M231.5,217 L232.2,276" fill="none" stroke="#1a0d05" stroke-width="1.8" opacity="0.55" stroke-linecap="round"/>
<path d="M231,283 C224,289 219.5,296 221.5,303 C224,311 229,318 231.5,331 C234,318 238,311 240,303 C242,296 238,289 231,283 Z" fill="none" stroke="#fff" stroke-width="1.8" opacity="0.1" transform="translate(1.3,1.3)" stroke-linecap="round"/><path d="M231,283 C224,289 219.5,296 221.5,303 C224,311 229,318 231.5,331 C234,318 238,311 240,303 C242,296 238,289 231,283 Z" fill="none" stroke="#1a0d05" stroke-width="3.78" opacity="0.193" stroke-linecap="round"/><path d="M231,283 C224,289 219.5,296 221.5,303 C224,311 229,318 231.5,331 C234,318 238,311 240,303 C242,296 238,289 231,283 Z" fill="none" stroke="#1a0d05" stroke-width="1.8" opacity="0.55" stroke-linecap="round"/>
<path d="M209,293.5 C211,287 214,283.5 218,281.5 C223,279 227,278 231.5,277 C236,278 240,279 245,281.5 C249,283.5 253,288 255,293.5" fill="none" stroke="#fff" stroke-width="1.8" opacity="0.1" transform="translate(1.3,1.3)" stroke-linecap="round"/><path d="M209,293.5 C211,287 214,283.5 218,281.5 C223,279 227,278 231.5,277 C236,278 240,279 245,281.5 C249,283.5 253,288 255,293.5" fill="none" stroke="#1a0d05" stroke-width="3.78" opacity="0.193" stroke-linecap="round"/><path d="M209,293.5 C211,287 214,283.5 218,281.5 C223,279 227,278 231.5,277 C236,278 240,279 245,281.5 C249,283.5 253,288 255,293.5" fill="none" stroke="#1a0d05" stroke-width="1.8" opacity="0.55" stroke-linecap="round"/>
<path d="M224,239.8 C216,237.5 196,237 180,247" fill="none" stroke="#fff" stroke-width="1.8" opacity="0.1" transform="translate(1.3,1.3)" stroke-linecap="round"/><path d="M224,239.8 C216,237.5 196,237 180,247" fill="none" stroke="#1a0d05" stroke-width="3.78" opacity="0.193" stroke-linecap="round"/><path d="M224,239.8 C216,237.5 196,237 180,247" fill="none" stroke="#1a0d05" stroke-width="1.8" opacity="0.55" stroke-linecap="round"/>
<path d="M224,242 C214,256 196,270 174,279.8 C169,282 164,283 160,283.5" fill="none" stroke="#fff" stroke-width="1.8" opacity="0.1" transform="translate(1.3,1.3)" stroke-linecap="round"/><path d="M224,242 C214,256 196,270 174,279.8 C169,282 164,283 160,283.5" fill="none" stroke="#1a0d05" stroke-width="3.78" opacity="0.193" stroke-linecap="round"/><path d="M224,242 C214,256 196,270 174,279.8 C169,282 164,283 160,283.5" fill="none" stroke="#1a0d05" stroke-width="1.8" opacity="0.55" stroke-linecap="round"/>
<path d="M216.5,246 C206,254 194,262 181.5,266" fill="none" stroke="#fff" stroke-width="1.8" opacity="0.1" transform="translate(1.3,1.3)" stroke-linecap="round"/><path d="M216.5,246 C206,254 194,262 181.5,266" fill="none" stroke="#1a0d05" stroke-width="3.78" opacity="0.193" stroke-linecap="round"/><path d="M216.5,246 C206,254 194,262 181.5,266" fill="none" stroke="#1a0d05" stroke-width="1.8" opacity="0.55" stroke-linecap="round"/>
<path d="M181.5,241 C168,248 158,258 152.8,268.5" fill="none" stroke="#fff" stroke-width="1.8" opacity="0.1" transform="translate(1.3,1.3)" stroke-linecap="round"/><path d="M181.5,241 C168,248 158,258 152.8,268.5" fill="none" stroke="#1a0d05" stroke-width="3.78" opacity="0.193" stroke-linecap="round"/><path d="M181.5,241 C168,248 158,258 152.8,268.5" fill="none" stroke="#1a0d05" stroke-width="1.8" opacity="0.55" stroke-linecap="round"/>
<path d="M239,241 C250,236 270,236 284,242 C296,248 310,258 316.5,268.5" fill="none" stroke="#fff" stroke-width="1.8" opacity="0.1" transform="translate(1.3,1.3)" stroke-linecap="round"/><path d="M239,241 C250,236 270,236 284,242 C296,248 310,258 316.5,268.5" fill="none" stroke="#1a0d05" stroke-width="3.78" opacity="0.193" stroke-linecap="round"/><path d="M239,241 C250,236 270,236 284,242 C296,248 310,258 316.5,268.5" fill="none" stroke="#1a0d05" stroke-width="1.8" opacity="0.55" stroke-linecap="round"/>
<path d="M240,244.8 C246,254 258,264 274,269.8 C288,275 300,278.5 309,279.8" fill="none" stroke="#fff" stroke-width="1.8" opacity="0.1" transform="translate(1.3,1.3)" stroke-linecap="round"/><path d="M240,244.8 C246,254 258,264 274,269.8 C288,275 300,278.5 309,279.8" fill="none" stroke="#1a0d05" stroke-width="3.78" opacity="0.193" stroke-linecap="round"/><path d="M240,244.8 C246,254 258,264 274,269.8 C288,275 300,278.5 309,279.8" fill="none" stroke="#1a0d05" stroke-width="1.8" opacity="0.55" stroke-linecap="round"/>
<path d="M249,246 C258,252 276,260 299,271" fill="none" stroke="#fff" stroke-width="1.8" opacity="0.1" transform="translate(1.3,1.3)" stroke-linecap="round"/><path d="M249,246 C258,252 276,260 299,271" fill="none" stroke="#1a0d05" stroke-width="3.78" opacity="0.193" stroke-linecap="round"/><path d="M249,246 C258,252 276,260 299,271" fill="none" stroke="#1a0d05" stroke-width="1.8" opacity="0.55" stroke-linecap="round"/>
<path d="M174,311 C178,306 186,303 195,304.5 C202,306 207,309.5 209,313.5" fill="none" stroke="#fff" stroke-width="1.8" opacity="0.1" transform="translate(1.3,1.3)" stroke-linecap="round"/><path d="M174,311 C178,306 186,303 195,304.5 C202,306 207,309.5 209,313.5" fill="none" stroke="#1a0d05" stroke-width="3.78" opacity="0.193" stroke-linecap="round"/><path d="M174,311 C178,306 186,303 195,304.5 C202,306 207,309.5 209,313.5" fill="none" stroke="#1a0d05" stroke-width="1.8" opacity="0.55" stroke-linecap="round"/>
<path d="M254,313.5 C257,308 264,305 272,305 C280,305 286,308 289,311" fill="none" stroke="#fff" stroke-width="1.8" opacity="0.1" transform="translate(1.3,1.3)" stroke-linecap="round"/><path d="M254,313.5 C257,308 264,305 272,305 C280,305 286,308 289,311" fill="none" stroke="#1a0d05" stroke-width="3.78" opacity="0.193" stroke-linecap="round"/><path d="M254,313.5 C257,308 264,305 272,305 C280,305 286,308 289,311" fill="none" stroke="#1a0d05" stroke-width="1.8" opacity="0.55" stroke-linecap="round"/>
<path d="M174,322.3 C186,321.5 200,322.5 209,327 C218,332.5 223,342 225,358.5" fill="none" stroke="#fff" stroke-width="1.8" opacity="0.1" transform="translate(1.3,1.3)" stroke-linecap="round"/><path d="M174,322.3 C186,321.5 200,322.5 209,327 C218,332.5 223,342 225,358.5" fill="none" stroke="#1a0d05" stroke-width="3.78" opacity="0.193" stroke-linecap="round"/><path d="M174,322.3 C186,321.5 200,322.5 209,327 C218,332.5 223,342 225,358.5" fill="none" stroke="#1a0d05" stroke-width="1.8" opacity="0.55" stroke-linecap="round"/>
<path d="M239,358.5 C240,345 245,334 255,327.5 C266,321.5 282,319.8 296.5,319.8" fill="none" stroke="#fff" stroke-width="1.8" opacity="0.1" transform="translate(1.3,1.3)" stroke-linecap="round"/><path d="M239,358.5 C240,345 245,334 255,327.5 C266,321.5 282,319.8 296.5,319.8" fill="none" stroke="#1a0d05" stroke-width="3.78" opacity="0.193" stroke-linecap="round"/><path d="M239,358.5 C240,345 245,334 255,327.5 C266,321.5 282,319.8 296.5,319.8" fill="none" stroke="#1a0d05" stroke-width="1.8" opacity="0.55" stroke-linecap="round"/>
<path d="M264,284.8 C266,292 270,297 276,299.5 C281,301.5 286,302.5 289,303.5" fill="none" stroke="#fff" stroke-width="1.8" opacity="0.1" transform="translate(1.3,1.3)" stroke-linecap="round"/><path d="M264,284.8 C266,292 270,297 276,299.5 C281,301.5 286,302.5 289,303.5" fill="none" stroke="#1a0d05" stroke-width="3.78" opacity="0.193" stroke-linecap="round"/><path d="M264,284.8 C266,292 270,297 276,299.5 C281,301.5 286,302.5 289,303.5" fill="none" stroke="#1a0d05" stroke-width="1.8" opacity="0.55" stroke-linecap="round"/>
<path d="M289,292.3 C295,298 300,306 302.8,318.5" fill="none" stroke="#fff" stroke-width="1.8" opacity="0.1" transform="translate(1.3,1.3)" stroke-linecap="round"/><path d="M289,292.3 C295,298 300,306 302.8,318.5" fill="none" stroke="#1a0d05" stroke-width="3.78" opacity="0.193" stroke-linecap="round"/><path d="M289,292.3 C295,298 300,306 302.8,318.5" fill="none" stroke="#1a0d05" stroke-width="1.8" opacity="0.55" stroke-linecap="round"/>
<path d="M152.8,266 C147,271 142,278 138,286 C135,291 133,295 131.5,298.5" fill="none" stroke="#fff" stroke-width="1.8" opacity="0.1" transform="translate(1.3,1.3)" stroke-linecap="round"/><path d="M152.8,266 C147,271 142,278 138,286 C135,291 133,295 131.5,298.5" fill="none" stroke="#1a0d05" stroke-width="3.78" opacity="0.193" stroke-linecap="round"/><path d="M152.8,266 C147,271 142,278 138,286 C135,291 133,295 131.5,298.5" fill="none" stroke="#1a0d05" stroke-width="1.8" opacity="0.55" stroke-linecap="round"/>
<path d="M126.5,304.8 C132,305 137,307.5 139,311 C140.5,317 138,323 134,328.5 C131,331.5 128,333 125.3,333.5" fill="none" stroke="#fff" stroke-width="1.8" opacity="0.1" transform="translate(1.3,1.3)" stroke-linecap="round"/><path d="M126.5,304.8 C132,305 137,307.5 139,311 C140.5,317 138,323 134,328.5 C131,331.5 128,333 125.3,333.5" fill="none" stroke="#1a0d05" stroke-width="3.78" opacity="0.193" stroke-linecap="round"/><path d="M126.5,304.8 C132,305 137,307.5 139,311 C140.5,317 138,323 134,328.5 C131,331.5 128,333 125.3,333.5" fill="none" stroke="#1a0d05" stroke-width="1.8" opacity="0.55" stroke-linecap="round"/>
<path d="M324,288.5 C330,294 334,300 336.5,306 C340,314 343,321 345.3,328.5" fill="none" stroke="#fff" stroke-width="1.8" opacity="0.1" transform="translate(1.3,1.3)" stroke-linecap="round"/><path d="M324,288.5 C330,294 334,300 336.5,306 C340,314 343,321 345.3,328.5" fill="none" stroke="#1a0d05" stroke-width="3.78" opacity="0.193" stroke-linecap="round"/><path d="M324,288.5 C330,294 334,300 336.5,306 C340,314 343,321 345.3,328.5" fill="none" stroke="#1a0d05" stroke-width="1.8" opacity="0.55" stroke-linecap="round"/>
<path d="M129,353.5 C129.5,359 130.5,364 131.5,368.5" fill="none" stroke="#fff" stroke-width="1.8" opacity="0.1" transform="translate(1.3,1.3)" stroke-linecap="round"/><path d="M129,353.5 C129.5,359 130.5,364 131.5,368.5" fill="none" stroke="#1a0d05" stroke-width="3.78" opacity="0.193" stroke-linecap="round"/><path d="M129,353.5 C129.5,359 130.5,364 131.5,368.5" fill="none" stroke="#1a0d05" stroke-width="1.8" opacity="0.55" stroke-linecap="round"/>
<path d="M236,556 L236,580" fill="none" stroke="#fff" stroke-width="1.3" opacity="0.06" transform="translate(1.3,1.3)" stroke-linecap="round"/><path d="M236,556 L236,580" fill="none" stroke="#1a0d05" stroke-width="2.73" opacity="0.115" stroke-linecap="round"/><path d="M236,556 L236,580" fill="none" stroke="#1a0d05" stroke-width="1.3" opacity="0.33" stroke-linecap="round"/>
<path d="M247,568 C252,560 260,560 266,564 C272,566 276,556 276,548" fill="none" stroke="#fff" stroke-width="1.3" opacity="0.06" transform="translate(1.3,1.3)" stroke-linecap="round"/><path d="M247,568 C252,560 260,560 266,564 C272,566 276,556 276,548" fill="none" stroke="#1a0d05" stroke-width="2.73" opacity="0.115" stroke-linecap="round"/><path d="M247,568 C252,560 260,560 266,564 C272,566 276,556 276,548" fill="none" stroke="#1a0d05" stroke-width="1.3" opacity="0.33" stroke-linecap="round"/>
<path d="M200,558 C206,564 214,566 220,562" fill="none" stroke="#fff" stroke-width="1.3" opacity="0.06" transform="translate(1.3,1.3)" stroke-linecap="round"/><path d="M200,558 C206,564 214,566 220,562" fill="none" stroke="#1a0d05" stroke-width="2.73" opacity="0.115" stroke-linecap="round"/><path d="M200,558 C206,564 214,566 220,562" fill="none" stroke="#1a0d05" stroke-width="1.3" opacity="0.33" stroke-linecap="round"/>
<path d="M160,488 C166,494 168,502 166,510" fill="none" stroke="#fff" stroke-width="1.3" opacity="0.06" transform="translate(1.3,1.3)" stroke-linecap="round"/><path d="M160,488 C166,494 168,502 166,510" fill="none" stroke="#1a0d05" stroke-width="2.73" opacity="0.115" stroke-linecap="round"/><path d="M160,488 C166,494 168,502 166,510" fill="none" stroke="#1a0d05" stroke-width="1.3" opacity="0.33" stroke-linecap="round"/>
<path d="M166,528 C172,540 180,550 186,556" fill="none" stroke="#fff" stroke-width="1.3" opacity="0.06" transform="translate(1.3,1.3)" stroke-linecap="round"/><path d="M166,528 C172,540 180,550 186,556" fill="none" stroke="#1a0d05" stroke-width="2.73" opacity="0.115" stroke-linecap="round"/><path d="M166,528 C172,540 180,550 186,556" fill="none" stroke="#1a0d05" stroke-width="1.3" opacity="0.33" stroke-linecap="round"/>
<path d="M284,532 C290,540 294,548 294,556" fill="none" stroke="#fff" stroke-width="1.3" opacity="0.06" transform="translate(1.3,1.3)" stroke-linecap="round"/><path d="M284,532 C290,540 294,548 294,556" fill="none" stroke="#1a0d05" stroke-width="2.73" opacity="0.115" stroke-linecap="round"/><path d="M284,532 C290,540 294,548 294,556" fill="none" stroke="#1a0d05" stroke-width="1.3" opacity="0.33" stroke-linecap="round"/>
<path d="M300,520 C304,528 304,536 300,544" fill="none" stroke="#fff" stroke-width="1.3" opacity="0.06" transform="translate(1.3,1.3)" stroke-linecap="round"/><path d="M300,520 C304,528 304,536 300,544" fill="none" stroke="#1a0d05" stroke-width="2.73" opacity="0.115" stroke-linecap="round"/><path d="M300,520 C304,528 304,536 300,544" fill="none" stroke="#1a0d05" stroke-width="1.3" opacity="0.33" stroke-linecap="round"/>
<path d="M150,420 C156,428 156,438 152,446" fill="none" stroke="#fff" stroke-width="1.3" opacity="0.06" transform="translate(1.3,1.3)" stroke-linecap="round"/><path d="M150,420 C156,428 156,438 152,446" fill="none" stroke="#1a0d05" stroke-width="2.73" opacity="0.115" stroke-linecap="round"/><path d="M150,420 C156,428 156,438 152,446" fill="none" stroke="#1a0d05" stroke-width="1.3" opacity="0.33" stroke-linecap="round"/>
<path d="M322,380 C328,392 330,404 328,416" fill="none" stroke="#fff" stroke-width="1.3" opacity="0.06" transform="translate(1.3,1.3)" stroke-linecap="round"/><path d="M322,380 C328,392 330,404 328,416" fill="none" stroke="#1a0d05" stroke-width="2.73" opacity="0.115" stroke-linecap="round"/><path d="M322,380 C328,392 330,404 328,416" fill="none" stroke="#1a0d05" stroke-width="1.3" opacity="0.33" stroke-linecap="round"/>
<path d="M277.0,351.0C279.0,352.0 285.3,354.6 289.0,357.0C292.7,359.4 295.6,361.6 299.0,365.6C302.4,369.6 306.8,374.9 309.4,381.0C312.0,387.1 313.3,394.2 314.6,402.0C315.9,409.8 316.6,419.3 317.0,428.0C317.4,436.7 317.4,445.3 317.0,454.0C316.6,462.7 315.7,471.3 314.6,480.0C313.6,488.7 312.5,497.8 310.7,506.0C308.9,514.2 306.4,522.2 304.0,529.5C301.6,536.8 297.7,546.6 296.4,550.0 M287.9,356.0Q286.6,353.9 282.5,355.8Q287.6,359.3 291.7,359.3 M287.9,356.0Q291.3,355.1 294.9,354.8Q294.6,357.8 291.7,359.3 M299.5,366.3Q292.8,363.2 284.0,363.5Q293.8,368.6 302.3,370.5 M299.5,366.3Q303.6,364.5 308.6,362.6Q306.9,367.2 302.3,370.5 M308.9,378.9Q298.2,374.9 286.6,373.8Q299.2,380.3 310.1,383.8 M308.9,378.9Q312.9,376.9 319.1,374.3Q316.2,379.6 310.1,383.8 M312.6,394.0Q298.5,388.2 283.4,385.4Q299.5,393.6 313.8,398.9 M312.6,394.0Q318.1,391.2 325.7,387.8Q321.4,393.9 313.8,398.9 M315.3,409.3Q296.5,403.9 277.4,401.4Q297.5,409.3 315.7,414.3 M315.3,409.3Q321.6,405.8 330.7,401.8Q324.9,408.5 315.7,414.3 M317.0,424.7Q299.7,419.4 282.4,416.8Q300.7,424.8 317.0,429.8 M317.0,424.7Q322.7,422.0 331.4,418.8Q326.0,424.7 317.0,429.8 M317.0,440.3Q298.1,434.0 279.1,430.5Q299.1,439.4 317.0,445.3 M317.0,440.3Q323.1,436.8 332.3,432.8Q326.4,439.5 317.0,445.3 M316.8,455.8Q299.5,450.2 282.5,447.3Q300.5,455.6 316.4,460.8 M316.8,455.8Q321.9,452.8 330.2,449.1Q325.2,455.5 316.4,460.8 M315.4,471.3Q297.2,467.8 279.4,467.1Q298.2,473.2 314.9,476.3 M315.4,471.3Q320.8,468.6 329.5,465.3Q324.1,471.3 314.9,476.3 M313.6,486.7Q296.5,481.3 280.0,478.8Q297.5,486.7 312.8,491.7 M313.6,486.7Q318.5,484.2 327.0,481.1Q321.8,486.9 312.8,491.7 M311.3,502.1Q295.6,496.6 280.5,493.9Q296.6,502.0 310.5,507.1 M311.3,502.1Q315.3,499.2 322.9,495.8Q318.6,501.9 310.5,507.1 M307.5,517.2Q293.5,513.6 280.5,513.0Q294.5,519.0 306.1,522.0 M307.5,517.2Q310.7,515.5 317.8,513.4Q314.0,518.2 306.1,522.0 M303.1,532.0Q292.5,530.1 283.2,531.1Q293.5,535.5 301.3,536.8 M303.1,532.0Q304.0,530.5 309.2,528.7Q307.3,533.2 301.3,536.8" fill="none" stroke="#3e200c" stroke-width="2.2" opacity="0.132" stroke-linejoin="round" stroke-linecap="round"/><path d="M277.0,351.0C279.0,352.0 285.3,354.6 289.0,357.0C292.7,359.4 295.6,361.6 299.0,365.6C302.4,369.6 306.8,374.9 309.4,381.0C312.0,387.1 313.3,394.2 314.6,402.0C315.9,409.8 316.6,419.3 317.0,428.0C317.4,436.7 317.4,445.3 317.0,454.0C316.6,462.7 315.7,471.3 314.6,480.0C313.6,488.7 312.5,497.8 310.7,506.0C308.9,514.2 306.4,522.2 304.0,529.5C301.6,536.8 297.7,546.6 296.4,550.0 M287.9,356.0Q286.6,353.9 282.5,355.8Q287.6,359.3 291.7,359.3 M287.9,356.0Q291.3,355.1 294.9,354.8Q294.6,357.8 291.7,359.3 M299.5,366.3Q292.8,363.2 284.0,363.5Q293.8,368.6 302.3,370.5 M299.5,366.3Q303.6,364.5 308.6,362.6Q306.9,367.2 302.3,370.5 M308.9,378.9Q298.2,374.9 286.6,373.8Q299.2,380.3 310.1,383.8 M308.9,378.9Q312.9,376.9 319.1,374.3Q316.2,379.6 310.1,383.8 M312.6,394.0Q298.5,388.2 283.4,385.4Q299.5,393.6 313.8,398.9 M312.6,394.0Q318.1,391.2 325.7,387.8Q321.4,393.9 313.8,398.9 M315.3,409.3Q296.5,403.9 277.4,401.4Q297.5,409.3 315.7,414.3 M315.3,409.3Q321.6,405.8 330.7,401.8Q324.9,408.5 315.7,414.3 M317.0,424.7Q299.7,419.4 282.4,416.8Q300.7,424.8 317.0,429.8 M317.0,424.7Q322.7,422.0 331.4,418.8Q326.0,424.7 317.0,429.8 M317.0,440.3Q298.1,434.0 279.1,430.5Q299.1,439.4 317.0,445.3 M317.0,440.3Q323.1,436.8 332.3,432.8Q326.4,439.5 317.0,445.3 M316.8,455.8Q299.5,450.2 282.5,447.3Q300.5,455.6 316.4,460.8 M316.8,455.8Q321.9,452.8 330.2,449.1Q325.2,455.5 316.4,460.8 M315.4,471.3Q297.2,467.8 279.4,467.1Q298.2,473.2 314.9,476.3 M315.4,471.3Q320.8,468.6 329.5,465.3Q324.1,471.3 314.9,476.3 M313.6,486.7Q296.5,481.3 280.0,478.8Q297.5,486.7 312.8,491.7 M313.6,486.7Q318.5,484.2 327.0,481.1Q321.8,486.9 312.8,491.7 M311.3,502.1Q295.6,496.6 280.5,493.9Q296.6,502.0 310.5,507.1 M311.3,502.1Q315.3,499.2 322.9,495.8Q318.6,501.9 310.5,507.1 M307.5,517.2Q293.5,513.6 280.5,513.0Q294.5,519.0 306.1,522.0 M307.5,517.2Q310.7,515.5 317.8,513.4Q314.0,518.2 306.1,522.0 M303.1,532.0Q292.5,530.1 283.2,531.1Q293.5,535.5 301.3,536.8 M303.1,532.0Q304.0,530.5 309.2,528.7Q307.3,533.2 301.3,536.8" fill="none" stroke="#3e200c" stroke-width="1.0" opacity="0.6" stroke-linejoin="round" stroke-linecap="round"/>
<path d="M160.8,397.8C160.2,402.3 157.9,415.5 157.0,425.0C156.1,434.5 155.4,446.2 155.6,455.0C155.8,463.8 157.1,471.5 158.0,478.0C158.9,484.5 159.0,486.6 160.8,494.0C162.6,501.4 166.1,514.9 168.6,522.6C171.1,530.3 174.8,537.1 176.0,540.0 M159.1,406.8Q167.0,402.8 174.9,401.9Q168.0,408.2 159.1,411.3 M159.1,409.8l-5.2,-3.1 M157.4,418.8Q167.8,413.9 178.1,411.9Q168.8,419.3 157.4,423.3 M157.4,421.8l-6.8,-4.0 M156.6,430.9Q168.6,425.3 180.6,422.6Q169.6,430.7 156.6,435.4 M156.6,433.9l-7.9,-4.6 M156.0,443.0Q169.2,437.2 182.5,434.4Q170.2,442.6 156.0,447.5 M156.0,446.0l-8.6,-5.0 M155.9,455.1Q169.4,448.6 182.9,445.2Q170.4,454.0 155.9,459.6 M155.9,458.1l-8.9,-5.2 M157.2,467.1Q170.8,461.1 184.4,458.1Q171.8,466.5 157.2,471.6 M157.2,470.1l-8.9,-5.2 M158.7,479.1Q170.7,471.5 182.6,466.8Q171.7,476.9 158.7,483.6 M158.7,482.1l-8.4,-5.0 M160.8,491.1Q172.1,485.0 183.5,481.9Q173.1,490.4 160.8,495.6 M160.8,494.1l-7.7,-4.5 M164.0,502.8Q174.0,498.4 183.9,497.1Q175.0,503.8 164.0,507.3 M164.0,505.8l-6.5,-3.8 M167.2,514.5Q174.3,510.9 181.5,510.3Q175.3,516.3 167.2,519.0 M167.2,517.5l-4.7,-2.8 M171.3,525.8Q173.9,524.7 176.6,526.5Q174.9,530.1 171.3,530.3 M171.3,528.8l-1.7,-1.0 M176.0,537.0Q177.3,536.2 178.5,538.4Q178.3,541.6 176.0,541.5 M176.0,540.0l-0.9,-0.5" fill="none" stroke="#f5d2b0" stroke-width="1.6" opacity="0.11" stroke-linecap="round" stroke-linejoin="round"/>
</g></g>
<g transform="translate(733,-10)"><g clip-path="url(#fc)">
<rect x="110" y="200" width="250" height="400" fill="url(#g4)"/>
<g filter="url(#b16)"><ellipse cx="266" cy="285" rx="20" ry="75" fill="#fff" opacity="0.105"/><ellipse cx="286" cy="430" rx="30" ry="60" fill="#fff" opacity="0.09"/><ellipse cx="165" cy="440" rx="30" ry="110" fill="#000" opacity="0.2"/><ellipse cx="180" cy="280" rx="30" ry="40" fill="#000" opacity="0.08"/><ellipse cx="188" cy="548" rx="36" ry="34" fill="#000" opacity="0.22"/><ellipse cx="176" cy="450" rx="18" ry="42" fill="#7a4210" opacity="0.1"/><ellipse cx="290" cy="520" rx="22" ry="40" fill="#7a4210" opacity="0.07"/></g>
<g filter="url(#b8)"><ellipse cx="148" cy="475" rx="12" ry="60" fill="#000" opacity="0.14"/><ellipse cx="176" cy="374" rx="40" ry="22" fill="#000" opacity="0.16"/><ellipse cx="200" cy="560" rx="18" ry="14" fill="#000" opacity="0.15"/><ellipse cx="325" cy="470" rx="12" ry="50" fill="#7a2a10" opacity="0.14"/><ellipse cx="172" cy="530" rx="14" ry="30" fill="#889" opacity="0.06"/></g>
<g filter="url(#b4)"><path d="M124,330 Q124,400 134,455 Q144,500 160,530" fill="none" stroke="#fff" stroke-width="7" stroke-linecap="round" stroke-linejoin="round" opacity="0.07"/><use href="#fo" fill="none" stroke="#000" stroke-width="9" opacity="0.22"/><path d="M140,352 Q175,332 214,348" fill="none" stroke="#fff" stroke-width="9" stroke-linecap="round" stroke-linejoin="round" opacity="0.06"/><path d="M252,346 Q292,322 330,344" fill="none" stroke="#fff" stroke-width="9" stroke-linecap="round" stroke-linejoin="round" opacity="0.1"/><path d="M203,336 L236,340 L232,372 Z" fill="#fff" opacity="0.13"/><ellipse cx="208" cy="366" rx="10" ry="12" fill="#000" opacity="0.35"/><ellipse cx="254" cy="366" rx="8" ry="12" fill="#000" opacity="0.28"/><ellipse cx="291" cy="362" rx="6" ry="12" fill="#fff" opacity="0.09"/><path d="M222,352 Q214,372 216,396" fill="none" stroke="#000" stroke-width="9" stroke-linecap="round" stroke-linejoin="round" opacity="0.3"/><ellipse cx="174" cy="373" rx="24" ry="9" fill="#fff" opacity="0.05"/><ellipse cx="292" cy="368" rx="26" ry="11" fill="#fff" opacity="0.16"/><ellipse cx="172" cy="401" rx="26" ry="6" fill="#000" opacity="0.12"/><ellipse cx="288" cy="400" rx="30" ry="7" fill="#fff" opacity="0.07"/><path d="M221,372 Q214,410 208,440" fill="none" stroke="#000" stroke-width="8" stroke-linecap="round" stroke-linejoin="round" opacity="0.16"/><path d="M247,372 Q253,410 262,440" fill="none" stroke="#fff" stroke-width="9" stroke-linecap="round" stroke-linejoin="round" opacity="0.08"/><ellipse cx="236" cy="452" rx="11" ry="9" fill="#fff" opacity="0.11"/><path d="M203,510 Q218,494 236,498 Q256,493 270,508" fill="none" stroke="#fff" stroke-width="11" stroke-linecap="round" stroke-linejoin="round" opacity="0.17"/><ellipse cx="238" cy="530" rx="28" ry="6.5" fill="#fff" opacity="0.24"/><ellipse cx="236" cy="545" rx="26" ry="4" fill="#000" opacity="0.28"/><ellipse cx="241" cy="566" rx="8" ry="18" fill="#fff" opacity="0.14"/><ellipse cx="137" cy="440" rx="5" ry="60" fill="#fff" opacity="0.05"/></g>
<g filter="url(#b2)"><use href="#fo" fill="none" stroke="#000" stroke-width="3" opacity="0.3"/><path d="M136,370 Q150,352 178,350 Q204,352 219,368" fill="none" stroke="#000" stroke-width="5" stroke-linecap="round" stroke-linejoin="round" opacity="0.5"/><path d="M248,364 Q262,346 292,342 Q318,344 332,362" fill="none" stroke="#000" stroke-width="5" stroke-linecap="round" stroke-linejoin="round" opacity="0.42"/><path d="M262,340.5 Q284,330 305,334.5" fill="none" stroke="#fff" stroke-width="2.6" stroke-linecap="round" stroke-linejoin="round" opacity="0.15"/><path d="M264,398 Q280,405 298,403" fill="none" stroke="#000" stroke-width="2.5" stroke-linecap="round" stroke-linejoin="round" opacity="0.18"/><path d="M224,362 Q217,400 213,440 Q216,450 226,448 Q229,410 231,364 Z" fill="#000" opacity="0.42"/><path d="M237,354 Q239,400 240,436" fill="none" stroke="#fff" stroke-width="3" stroke-linecap="round" stroke-linejoin="round" opacity="0.13"/><ellipse cx="208" cy="458" rx="7" ry="8" fill="#fff" opacity="0.05"/><ellipse cx="260" cy="457" rx="6" ry="8" fill="#fff" opacity="0.07"/><path d="M266,443 Q272,457 265,467" fill="none" stroke="#000" stroke-width="2.5" stroke-linecap="round" stroke-linejoin="round" opacity="0.28"/><path d="M214,470 Q236,480 258,469" fill="none" stroke="#000" stroke-width="6" stroke-linecap="round" stroke-linejoin="round" opacity="0.5"/><ellipse cx="235" cy="485" rx="4" ry="7" fill="#000" opacity="0.22"/><ellipse cx="228" cy="486" rx="3" ry="6" fill="#fff" opacity="0.05"/><path d="M195,520.5 Q214,513 235,513.5 Q258,511.5 274,515" fill="none" stroke="#000" stroke-width="5" stroke-linecap="round" stroke-linejoin="round" opacity="0.58"/><ellipse cx="245" cy="529" rx="9" ry="3" fill="#fff" opacity="0.12"/><ellipse cx="193.5" cy="521" rx="3" ry="2.4" fill="#fff" opacity="0.16"/><ellipse cx="196" cy="463" rx="2" ry="5" fill="#fff" opacity="0.1" transform="rotate(20 196 463)"/></g>
<g filter="url(#b1)"><path d="M141,379 Q158,392 176,391 Q191,390 202,382" fill="none" stroke="#000" stroke-width="2.2" stroke-linecap="round" stroke-linejoin="round" opacity="0.75"/><path d="M264,382 Q278,391 294,390 Q310,388 323,376" fill="none" stroke="#000" stroke-width="2.2" stroke-linecap="round" stroke-linejoin="round" opacity="0.75"/><path d="M217.5,402 L216.5,432" fill="none" stroke="#93a4cc" stroke-width="2.2" stroke-linecap="round" stroke-linejoin="round" opacity="0.32"/><path d="M205,443 Q196,455 203,467 Q210,473 219,468" fill="none" stroke="#000" stroke-width="2.2" stroke-linecap="round" stroke-linejoin="round" opacity="0.42"/><path d="M219,462 Q226,470 234,468 M240,468 Q248,470 254,463" fill="none" stroke="#000" stroke-width="2.5" stroke-linecap="round" stroke-linejoin="round" opacity="0.35"/><ellipse cx="212.5" cy="468" rx="2.4" ry="3.4" fill="#fff" opacity="0.22"/><ellipse cx="249" cy="466" rx="2.4" ry="2.6" fill="#fff" opacity="0.1"/><path d="M199,520 Q216,516 235,516 Q256,515 270,516" fill="none" stroke="#000" stroke-width="2" stroke-linecap="round" stroke-linejoin="round" opacity="0.35"/></g>
<path d="M231.5,217 L232.2,276" fill="none" stroke="#fff" stroke-width="1.8" opacity="0.1" transform="translate(1.3,1.3)" stroke-linecap="round"/><path d="M231.5,217 L232.2,276" fill="none" stroke="#1a0d05" stroke-width="3.78" opacity="0.158" stroke-linecap="round"/><path d="M231.5,217 L232.2,276" fill="none" stroke="#1a0d05" stroke-width="1.8" opacity="0.45" stroke-linecap="round"/>
<path d="M231,283 C224,289 219.5,296 221.5,303 C224,311 229,318 231.5,331 C234,318 238,311 240,303 C242,296 238,289 231,283 Z" fill="none" stroke="#fff" stroke-width="1.8" opacity="0.1" transform="translate(1.3,1.3)" stroke-linecap="round"/><path d="M231,283 C224,289 219.5,296 221.5,303 C224,311 229,318 231.5,331 C234,318 238,311 240,303 C242,296 238,289 231,283 Z" fill="none" stroke="#1a0d05" stroke-width="3.78" opacity="0.158" stroke-linecap="round"/><path d="M231,283 C224,289 219.5,296 221.5,303 C224,311 229,318 231.5,331 C234,318 238,311 240,303 C242,296 238,289 231,283 Z" fill="none" stroke="#1a0d05" stroke-width="1.8" opacity="0.45" stroke-linecap="round"/>
<path d="M209,293.5 C211,287 214,283.5 218,281.5 C223,279 227,278 231.5,277 C236,278 240,279 245,281.5 C249,283.5 253,288 255,293.5" fill="none" stroke="#fff" stroke-width="1.8" opacity="0.1" transform="translate(1.3,1.3)" stroke-linecap="round"/><path d="M209,293.5 C211,287 214,283.5 218,281.5 C223,279 227,278 231.5,277 C236,278 240,279 245,281.5 C249,283.5 253,288 255,293.5" fill="none" stroke="#1a0d05" stroke-width="3.78" opacity="0.158" stroke-linecap="round"/><path d="M209,293.5 C211,287 214,283.5 218,281.5 C223,279 227,278 231.5,277 C236,278 240,279 245,281.5 C249,283.5 253,288 255,293.5" fill="none" stroke="#1a0d05" stroke-width="1.8" opacity="0.45" stroke-linecap="round"/>
<path d="M224,239.8 C216,237.5 196,237 180,247" fill="none" stroke="#fff" stroke-width="1.8" opacity="0.1" transform="translate(1.3,1.3)" stroke-linecap="round"/><path d="M224,239.8 C216,237.5 196,237 180,247" fill="none" stroke="#1a0d05" stroke-width="3.78" opacity="0.158" stroke-linecap="round"/><path d="M224,239.8 C216,237.5 196,237 180,247" fill="none" stroke="#1a0d05" stroke-width="1.8" opacity="0.45" stroke-linecap="round"/>
<path d="M224,242 C214,256 196,270 174,279.8 C169,282 164,283 160,283.5" fill="none" stroke="#fff" stroke-width="1.8" opacity="0.1" transform="translate(1.3,1.3)" stroke-linecap="round"/><path d="M224,242 C214,256 196,270 174,279.8 C169,282 164,283 160,283.5" fill="none" stroke="#1a0d05" stroke-width="3.78" opacity="0.158" stroke-linecap="round"/><path d="M224,242 C214,256 196,270 174,279.8 C169,282 164,283 160,283.5" fill="none" stroke="#1a0d05" stroke-width="1.8" opacity="0.45" stroke-linecap="round"/>
<path d="M216.5,246 C206,254 194,262 181.5,266" fill="none" stroke="#fff" stroke-width="1.8" opacity="0.1" transform="translate(1.3,1.3)" stroke-linecap="round"/><path d="M216.5,246 C206,254 194,262 181.5,266" fill="none" stroke="#1a0d05" stroke-width="3.78" opacity="0.158" stroke-linecap="round"/><path d="M216.5,246 C206,254 194,262 181.5,266" fill="none" stroke="#1a0d05" stroke-width="1.8" opacity="0.45" stroke-linecap="round"/>
<path d="M181.5,241 C168,248 158,258 152.8,268.5" fill="none" stroke="#fff" stroke-width="1.8" opacity="0.1" transform="translate(1.3,1.3)" stroke-linecap="round"/><path d="M181.5,241 C168,248 158,258 152.8,268.5" fill="none" stroke="#1a0d05" stroke-width="3.78" opacity="0.158" stroke-linecap="round"/><path d="M181.5,241 C168,248 158,258 152.8,268.5" fill="none" stroke="#1a0d05" stroke-width="1.8" opacity="0.45" stroke-linecap="round"/>
<path d="M239,241 C250,236 270,236 284,242 C296,248 310,258 316.5,268.5" fill="none" stroke="#fff" stroke-width="1.8" opacity="0.1" transform="translate(1.3,1.3)" stroke-linecap="round"/><path d="M239,241 C250,236 270,236 284,242 C296,248 310,258 316.5,268.5" fill="none" stroke="#1a0d05" stroke-width="3.78" opacity="0.158" stroke-linecap="round"/><path d="M239,241 C250,236 270,236 284,242 C296,248 310,258 316.5,268.5" fill="none" stroke="#1a0d05" stroke-width="1.8" opacity="0.45" stroke-linecap="round"/>
<path d="M240,244.8 C246,254 258,264 274,269.8 C288,275 300,278.5 309,279.8" fill="none" stroke="#fff" stroke-width="1.8" opacity="0.1" transform="translate(1.3,1.3)" stroke-linecap="round"/><path d="M240,244.8 C246,254 258,264 274,269.8 C288,275 300,278.5 309,279.8" fill="none" stroke="#1a0d05" stroke-width="3.78" opacity="0.158" stroke-linecap="round"/><path d="M240,244.8 C246,254 258,264 274,269.8 C288,275 300,278.5 309,279.8" fill="none" stroke="#1a0d05" stroke-width="1.8" opacity="0.45" stroke-linecap="round"/>
<path d="M249,246 C258,252 276,260 299,271" fill="none" stroke="#fff" stroke-width="1.8" opacity="0.1" transform="translate(1.3,1.3)" stroke-linecap="round"/><path d="M249,246 C258,252 276,260 299,271" fill="none" stroke="#1a0d05" stroke-width="3.78" opacity="0.158" stroke-linecap="round"/><path d="M249,246 C258,252 276,260 299,271" fill="none" stroke="#1a0d05" stroke-width="1.8" opacity="0.45" stroke-linecap="round"/>
<path d="M174,311 C178,306 186,303 195,304.5 C202,306 207,309.5 209,313.5" fill="none" stroke="#fff" stroke-width="1.8" opacity="0.1" transform="translate(1.3,1.3)" stroke-linecap="round"/><path d="M174,311 C178,306 186,303 195,304.5 C202,306 207,309.5 209,313.5" fill="none" stroke="#1a0d05" stroke-width="3.78" opacity="0.158" stroke-linecap="round"/><path d="M174,311 C178,306 186,303 195,304.5 C202,306 207,309.5 209,313.5" fill="none" stroke="#1a0d05" stroke-width="1.8" opacity="0.45" stroke-linecap="round"/>
<path d="M254,313.5 C257,308 264,305 272,305 C280,305 286,308 289,311" fill="none" stroke="#fff" stroke-width="1.8" opacity="0.1" transform="translate(1.3,1.3)" stroke-linecap="round"/><path d="M254,313.5 C257,308 264,305 272,305 C280,305 286,308 289,311" fill="none" stroke="#1a0d05" stroke-width="3.78" opacity="0.158" stroke-linecap="round"/><path d="M254,313.5 C257,308 264,305 272,305 C280,305 286,308 289,311" fill="none" stroke="#1a0d05" stroke-width="1.8" opacity="0.45" stroke-linecap="round"/>
<path d="M174,322.3 C186,321.5 200,322.5 209,327 C218,332.5 223,342 225,358.5" fill="none" stroke="#fff" stroke-width="1.8" opacity="0.1" transform="translate(1.3,1.3)" stroke-linecap="round"/><path d="M174,322.3 C186,321.5 200,322.5 209,327 C218,332.5 223,342 225,358.5" fill="none" stroke="#1a0d05" stroke-width="3.78" opacity="0.158" stroke-linecap="round"/><path d="M174,322.3 C186,321.5 200,322.5 209,327 C218,332.5 223,342 225,358.5" fill="none" stroke="#1a0d05" stroke-width="1.8" opacity="0.45" stroke-linecap="round"/>
<path d="M239,358.5 C240,345 245,334 255,327.5 C266,321.5 282,319.8 296.5,319.8" fill="none" stroke="#fff" stroke-width="1.8" opacity="0.1" transform="translate(1.3,1.3)" stroke-linecap="round"/><path d="M239,358.5 C240,345 245,334 255,327.5 C266,321.5 282,319.8 296.5,319.8" fill="none" stroke="#1a0d05" stroke-width="3.78" opacity="0.158" stroke-linecap="round"/><path d="M239,358.5 C240,345 245,334 255,327.5 C266,321.5 282,319.8 296.5,319.8" fill="none" stroke="#1a0d05" stroke-width="1.8" opacity="0.45" stroke-linecap="round"/>
<path d="M264,284.8 C266,292 270,297 276,299.5 C281,301.5 286,302.5 289,303.5" fill="none" stroke="#fff" stroke-width="1.8" opacity="0.1" transform="translate(1.3,1.3)" stroke-linecap="round"/><path d="M264,284.8 C266,292 270,297 276,299.5 C281,301.5 286,302.5 289,303.5" fill="none" stroke="#1a0d05" stroke-width="3.78" opacity="0.158" stroke-linecap="round"/><path d="M264,284.8 C266,292 270,297 276,299.5 C281,301.5 286,302.5 289,303.5" fill="none" stroke="#1a0d05" stroke-width="1.8" opacity="0.45" stroke-linecap="round"/>
<path d="M289,292.3 C295,298 300,306 302.8,318.5" fill="none" stroke="#fff" stroke-width="1.8" opacity="0.1" transform="translate(1.3,1.3)" stroke-linecap="round"/><path d="M289,292.3 C295,298 300,306 302.8,318.5" fill="none" stroke="#1a0d05" stroke-width="3.78" opacity="0.158" stroke-linecap="round"/><path d="M289,292.3 C295,298 300,306 302.8,318.5" fill="none" stroke="#1a0d05" stroke-width="1.8" opacity="0.45" stroke-linecap="round"/>
<path d="M152.8,266 C147,271 142,278 138,286 C135,291 133,295 131.5,298.5" fill="none" stroke="#fff" stroke-width="1.8" opacity="0.1" transform="translate(1.3,1.3)" stroke-linecap="round"/><path d="M152.8,266 C147,271 142,278 138,286 C135,291 133,295 131.5,298.5" fill="none" stroke="#1a0d05" stroke-width="3.78" opacity="0.158" stroke-linecap="round"/><path d="M152.8,266 C147,271 142,278 138,286 C135,291 133,295 131.5,298.5" fill="none" stroke="#1a0d05" stroke-width="1.8" opacity="0.45" stroke-linecap="round"/>
<path d="M126.5,304.8 C132,305 137,307.5 139,311 C140.5,317 138,323 134,328.5 C131,331.5 128,333 125.3,333.5" fill="none" stroke="#fff" stroke-width="1.8" opacity="0.1" transform="translate(1.3,1.3)" stroke-linecap="round"/><path d="M126.5,304.8 C132,305 137,307.5 139,311 C140.5,317 138,323 134,328.5 C131,331.5 128,333 125.3,333.5" fill="none" stroke="#1a0d05" stroke-width="3.78" opacity="0.158" stroke-linecap="round"/><path d="M126.5,304.8 C132,305 137,307.5 139,311 C140.5,317 138,323 134,328.5 C131,331.5 128,333 125.3,333.5" fill="none" stroke="#1a0d05" stroke-width="1.8" opacity="0.45" stroke-linecap="round"/>
<path d="M324,288.5 C330,294 334,300 336.5,306 C340,314 343,321 345.3,328.5" fill="none" stroke="#fff" stroke-width="1.8" opacity="0.1" transform="translate(1.3,1.3)" stroke-linecap="round"/><path d="M324,288.5 C330,294 334,300 336.5,306 C340,314 343,321 345.3,328.5" fill="none" stroke="#1a0d05" stroke-width="3.78" opacity="0.158" stroke-linecap="round"/><path d="M324,288.5 C330,294 334,300 336.5,306 C340,314 343,321 345.3,328.5" fill="none" stroke="#1a0d05" stroke-width="1.8" opacity="0.45" stroke-linecap="round"/>
<path d="M129,353.5 C129.5,359 130.5,364 131.5,368.5" fill="none" stroke="#fff" stroke-width="1.8" opacity="0.1" transform="translate(1.3,1.3)" stroke-linecap="round"/><path d="M129,353.5 C129.5,359 130.5,364 131.5,368.5" fill="none" stroke="#1a0d05" stroke-width="3.78" opacity="0.158" stroke-linecap="round"/><path d="M129,353.5 C129.5,359 130.5,364 131.5,368.5" fill="none" stroke="#1a0d05" stroke-width="1.8" opacity="0.45" stroke-linecap="round"/>
<path d="M236,556 L236,580" fill="none" stroke="#fff" stroke-width="1.3" opacity="0.06" transform="translate(1.3,1.3)" stroke-linecap="round"/><path d="M236,556 L236,580" fill="none" stroke="#1a0d05" stroke-width="2.73" opacity="0.095" stroke-linecap="round"/><path d="M236,556 L236,580" fill="none" stroke="#1a0d05" stroke-width="1.3" opacity="0.27" stroke-linecap="round"/>
<path d="M247,568 C252,560 260,560 266,564 C272,566 276,556 276,548" fill="none" stroke="#fff" stroke-width="1.3" opacity="0.06" transform="translate(1.3,1.3)" stroke-linecap="round"/><path d="M247,568 C252,560 260,560 266,564 C272,566 276,556 276,548" fill="none" stroke="#1a0d05" stroke-width="2.73" opacity="0.095" stroke-linecap="round"/><path d="M247,568 C252,560 260,560 266,564 C272,566 276,556 276,548" fill="none" stroke="#1a0d05" stroke-width="1.3" opacity="0.27" stroke-linecap="round"/>
<path d="M200,558 C206,564 214,566 220,562" fill="none" stroke="#fff" stroke-width="1.3" opacity="0.06" transform="translate(1.3,1.3)" stroke-linecap="round"/><path d="M200,558 C206,564 214,566 220,562" fill="none" stroke="#1a0d05" stroke-width="2.73" opacity="0.095" stroke-linecap="round"/><path d="M200,558 C206,564 214,566 220,562" fill="none" stroke="#1a0d05" stroke-width="1.3" opacity="0.27" stroke-linecap="round"/>
<path d="M160,488 C166,494 168,502 166,510" fill="none" stroke="#fff" stroke-width="1.3" opacity="0.06" transform="translate(1.3,1.3)" stroke-linecap="round"/><path d="M160,488 C166,494 168,502 166,510" fill="none" stroke="#1a0d05" stroke-width="2.73" opacity="0.095" stroke-linecap="round"/><path d="M160,488 C166,494 168,502 166,510" fill="none" stroke="#1a0d05" stroke-width="1.3" opacity="0.27" stroke-linecap="round"/>
<path d="M166,528 C172,540 180,550 186,556" fill="none" stroke="#fff" stroke-width="1.3" opacity="0.06" transform="translate(1.3,1.3)" stroke-linecap="round"/><path d="M166,528 C172,540 180,550 186,556" fill="none" stroke="#1a0d05" stroke-width="2.73" opacity="0.095" stroke-linecap="round"/><path d="M166,528 C172,540 180,550 186,556" fill="none" stroke="#1a0d05" stroke-width="1.3" opacity="0.27" stroke-linecap="round"/>
<path d="M284,532 C290,540 294,548 294,556" fill="none" stroke="#fff" stroke-width="1.3" opacity="0.06" transform="translate(1.3,1.3)" stroke-linecap="round"/><path d="M284,532 C290,540 294,548 294,556" fill="none" stroke="#1a0d05" stroke-width="2.73" opacity="0.095" stroke-linecap="round"/><path d="M284,532 C290,540 294,548 294,556" fill="none" stroke="#1a0d05" stroke-width="1.3" opacity="0.27" stroke-linecap="round"/>
<path d="M300,520 C304,528 304,536 300,544" fill="none" stroke="#fff" stroke-width="1.3" opacity="0.06" transform="translate(1.3,1.3)" stroke-linecap="round"/><path d="M300,520 C304,528 304,536 300,544" fill="none" stroke="#1a0d05" stroke-width="2.73" opacity="0.095" stroke-linecap="round"/><path d="M300,520 C304,528 304,536 300,544" fill="none" stroke="#1a0d05" stroke-width="1.3" opacity="0.27" stroke-linecap="round"/>
<path d="M150,420 C156,428 156,438 152,446" fill="none" stroke="#fff" stroke-width="1.3" opacity="0.06" transform="translate(1.3,1.3)" stroke-linecap="round"/><path d="M150,420 C156,428 156,438 152,446" fill="none" stroke="#1a0d05" stroke-width="2.73" opacity="0.095" stroke-linecap="round"/><path d="M150,420 C156,428 156,438 152,446" fill="none" stroke="#1a0d05" stroke-width="1.3" opacity="0.27" stroke-linecap="round"/>
<path d="M322,380 C328,392 330,404 328,416" fill="none" stroke="#fff" stroke-width="1.3" opacity="0.06" transform="translate(1.3,1.3)" stroke-linecap="round"/><path d="M322,380 C328,392 330,404 328,416" fill="none" stroke="#1a0d05" stroke-width="2.73" opacity="0.095" stroke-linecap="round"/><path d="M322,380 C328,392 330,404 328,416" fill="none" stroke="#1a0d05" stroke-width="1.3" opacity="0.27" stroke-linecap="round"/>
<path d="M277.0,351.0C279.0,352.0 285.3,354.6 289.0,357.0C292.7,359.4 295.6,361.6 299.0,365.6C302.4,369.6 306.8,374.9 309.4,381.0C312.0,387.1 313.3,394.2 314.6,402.0C315.9,409.8 316.6,419.3 317.0,428.0C317.4,436.7 317.4,445.3 317.0,454.0C316.6,462.7 315.7,471.3 314.6,480.0C313.6,488.7 312.5,497.8 310.7,506.0C308.9,514.2 306.4,522.2 304.0,529.5C301.6,536.8 297.7,546.6 296.4,550.0 M287.9,356.0Q286.5,354.2 282.3,356.5Q287.5,359.6 291.7,359.3 M287.9,356.0Q291.3,355.1 294.9,354.9Q294.6,357.8 291.7,359.3 M299.5,366.3Q293.3,364.3 285.1,365.6Q294.3,369.7 302.3,370.5 M299.5,366.3Q303.5,365.0 308.5,363.6Q306.8,367.7 302.3,370.5 M308.9,378.9Q295.8,374.1 281.9,372.2Q296.8,379.5 310.1,383.8 M308.9,378.9Q314.2,376.8 321.6,374.1Q317.5,379.5 310.1,383.8 M312.6,394.0Q298.1,389.5 282.7,387.9Q299.1,394.9 313.8,398.9 M312.6,394.0Q317.9,390.9 325.3,387.3Q321.2,393.6 313.8,398.9 M315.3,409.3Q298.6,405.7 281.6,405.0Q299.6,411.1 315.7,414.3 M315.3,409.3Q320.3,405.8 328.1,401.8Q323.6,408.5 315.7,414.3 M317.0,424.7Q297.0,417.8 277.0,413.6Q298.0,423.2 317.0,429.8 M317.0,424.7Q323.7,421.2 333.4,417.1Q327.0,423.9 317.0,429.8 M317.0,440.3Q296.4,435.6 275.9,433.7Q297.4,441.0 317.0,445.3 M317.0,440.3Q323.1,436.0 332.1,431.1Q326.4,438.7 317.0,445.3 M316.8,455.8Q297.4,449.5 278.2,446.0Q298.4,454.9 316.4,460.8 M316.8,455.8Q322.9,452.6 332.3,448.8Q326.2,455.3 316.4,460.8 M315.4,471.3Q295.1,467.1 275.2,465.8Q296.1,472.5 314.9,476.3 M315.4,471.3Q321.3,467.7 330.4,463.4Q324.6,470.4 314.9,476.3 M313.6,486.7Q295.6,481.7 278.2,479.6Q296.6,487.1 312.8,491.7 M313.6,486.7Q318.0,483.0 325.9,478.7Q321.3,485.7 312.8,491.7 M311.3,502.1Q295.6,499.0 280.5,498.8Q296.6,504.4 310.5,507.1 M311.3,502.1Q315.6,500.1 323.4,497.5Q318.9,502.8 310.5,507.1 M307.5,517.2Q293.4,513.3 280.4,512.4Q294.4,518.7 306.1,522.0 M307.5,517.2Q310.2,514.7 316.8,511.9Q313.5,517.4 306.1,522.0 M303.1,532.0Q292.7,529.3 283.5,529.6Q293.7,534.7 301.3,536.8 M303.1,532.0Q304.5,531.2 310.2,529.9Q307.8,533.9 301.3,536.8" fill="none" stroke="#22120a" stroke-width="2.2" opacity="0.110" stroke-linejoin="round" stroke-linecap="round"/><path d="M277.0,351.0C279.0,352.0 285.3,354.6 289.0,357.0C292.7,359.4 295.6,361.6 299.0,365.6C302.4,369.6 306.8,374.9 309.4,381.0C312.0,387.1 313.3,394.2 314.6,402.0C315.9,409.8 316.6,419.3 317.0,428.0C317.4,436.7 317.4,445.3 317.0,454.0C316.6,462.7 315.7,471.3 314.6,480.0C313.6,488.7 312.5,497.8 310.7,506.0C308.9,514.2 306.4,522.2 304.0,529.5C301.6,536.8 297.7,546.6 296.4,550.0 M287.9,356.0Q286.5,354.2 282.3,356.5Q287.5,359.6 291.7,359.3 M287.9,356.0Q291.3,355.1 294.9,354.9Q294.6,357.8 291.7,359.3 M299.5,366.3Q293.3,364.3 285.1,365.6Q294.3,369.7 302.3,370.5 M299.5,366.3Q303.5,365.0 308.5,363.6Q306.8,367.7 302.3,370.5 M308.9,378.9Q295.8,374.1 281.9,372.2Q296.8,379.5 310.1,383.8 M308.9,378.9Q314.2,376.8 321.6,374.1Q317.5,379.5 310.1,383.8 M312.6,394.0Q298.1,389.5 282.7,387.9Q299.1,394.9 313.8,398.9 M312.6,394.0Q317.9,390.9 325.3,387.3Q321.2,393.6 313.8,398.9 M315.3,409.3Q298.6,405.7 281.6,405.0Q299.6,411.1 315.7,414.3 M315.3,409.3Q320.3,405.8 328.1,401.8Q323.6,408.5 315.7,414.3 M317.0,424.7Q297.0,417.8 277.0,413.6Q298.0,423.2 317.0,429.8 M317.0,424.7Q323.7,421.2 333.4,417.1Q327.0,423.9 317.0,429.8 M317.0,440.3Q296.4,435.6 275.9,433.7Q297.4,441.0 317.0,445.3 M317.0,440.3Q323.1,436.0 332.1,431.1Q326.4,438.7 317.0,445.3 M316.8,455.8Q297.4,449.5 278.2,446.0Q298.4,454.9 316.4,460.8 M316.8,455.8Q322.9,452.6 332.3,448.8Q326.2,455.3 316.4,460.8 M315.4,471.3Q295.1,467.1 275.2,465.8Q296.1,472.5 314.9,476.3 M315.4,471.3Q321.3,467.7 330.4,463.4Q324.6,470.4 314.9,476.3 M313.6,486.7Q295.6,481.7 278.2,479.6Q296.6,487.1 312.8,491.7 M313.6,486.7Q318.0,483.0 325.9,478.7Q321.3,485.7 312.8,491.7 M311.3,502.1Q295.6,499.0 280.5,498.8Q296.6,504.4 310.5,507.1 M311.3,502.1Q315.6,500.1 323.4,497.5Q318.9,502.8 310.5,507.1 M307.5,517.2Q293.4,513.3 280.4,512.4Q294.4,518.7 306.1,522.0 M307.5,517.2Q310.2,514.7 316.8,511.9Q313.5,517.4 306.1,522.0 M303.1,532.0Q292.7,529.3 283.5,529.6Q293.7,534.7 301.3,536.8 M303.1,532.0Q304.5,531.2 310.2,529.9Q307.8,533.9 301.3,536.8" fill="none" stroke="#22120a" stroke-width="1.0" opacity="0.5" stroke-linejoin="round" stroke-linecap="round"/>
<path d="M160.8,397.8C160.2,402.3 157.9,415.5 157.0,425.0C156.1,434.5 155.4,446.2 155.6,455.0C155.8,463.8 157.1,471.5 158.0,478.0C158.9,484.5 159.0,486.6 160.8,494.0C162.6,501.4 166.1,514.9 168.6,522.6C171.1,530.3 174.8,537.1 176.0,540.0 M159.1,406.8Q167.0,402.8 174.9,401.9Q168.0,408.2 159.1,411.3 M159.1,409.8l-5.2,-3.1 M157.4,418.8Q167.8,413.9 178.1,411.9Q168.8,419.3 157.4,423.3 M157.4,421.8l-6.8,-4.0 M156.6,430.9Q168.6,425.3 180.6,422.6Q169.6,430.7 156.6,435.4 M156.6,433.9l-7.9,-4.6 M156.0,443.0Q169.2,437.2 182.5,434.4Q170.2,442.6 156.0,447.5 M156.0,446.0l-8.6,-5.0 M155.9,455.1Q169.4,448.6 182.9,445.2Q170.4,454.0 155.9,459.6 M155.9,458.1l-8.9,-5.2 M157.2,467.1Q170.8,461.1 184.4,458.1Q171.8,466.5 157.2,471.6 M157.2,470.1l-8.9,-5.2 M158.7,479.1Q170.7,471.5 182.6,466.8Q171.7,476.9 158.7,483.6 M158.7,482.1l-8.4,-5.0 M160.8,491.1Q172.1,485.0 183.5,481.9Q173.1,490.4 160.8,495.6 M160.8,494.1l-7.7,-4.5 M164.0,502.8Q174.0,498.4 183.9,497.1Q175.0,503.8 164.0,507.3 M164.0,505.8l-6.5,-3.8 M167.2,514.5Q174.3,510.9 181.5,510.3Q175.3,516.3 167.2,519.0 M167.2,517.5l-4.7,-2.8 M171.3,525.8Q173.9,524.7 176.6,526.5Q174.9,530.1 171.3,530.3 M171.3,528.8l-1.7,-1.0 M176.0,537.0Q177.3,536.2 178.5,538.4Q178.3,541.6 176.0,541.5 M176.0,540.0l-0.9,-0.5" fill="none" stroke="#f5d2b0" stroke-width="1.6" opacity="0.06" stroke-linecap="round" stroke-linejoin="round"/>
</g></g>
<circle cx="833" cy="736" r="59" fill="none" stroke="#e0713d" stroke-width="1.6"/><circle cx="833" cy="736" r="2" fill="#e08a3d"/>
</svg>
<div class="pn" style="left:0px;top:0px;width:332.5px;height:36.6px;border-radius:0 0 7px 0;background:#2a2a2b;"></div>
<div class="pn" style="left:811.3px;top:0px;width:368.7px;height:36.6px;border-radius:0 0 0 7px;background:#2a2a2b;"></div>
<div class="pn" style="left:0px;top:46px;width:44px;height:776px;border-radius:0 6px 0 0;background:#2b2b2b;"></div>
<div class="pn" style="left:0px;top:138.2px;width:44px;height:47.2px;border-radius:0;background:#5b5b5b;"></div>
<div class="pn" style="left:0px;top:804px;width:44px;height:18px;border-radius:0;background:linear-gradient(#2b2b2b,#8a4755);"></div>
<div class="pn" style="left:0px;top:829.6px;width:516px;height:55.4px;border-radius:0 7px 0 0;background:#2b2b2c;"></div>
<div class="pn" style="left:1143.4px;top:97px;width:36.6px;height:43px;border-radius:6px 0 0 6px;background:#332a2a;"></div>
<div class="pn" style="left:1143.4px;top:146px;width:36.6px;height:234.4px;border-radius:6px 0 0 6px;background:#2d2d2d;"></div>
<div class="pn" style="left:1147px;top:150px;width:29.2px;height:111px;border-radius:3px;background:#353535;"></div>
<div class="pn" style="left:1147px;top:234.4px;width:29.2px;height:26.4px;border-radius:3px;background:#c5504b;"></div>
<div class="pn" style="left:1146.6px;top:263px;width:29.6px;height:116px;border-radius:3px;background:#383838;"></div>
<div class="pn" style="left:1146.6px;top:292.7px;width:29.6px;height:86px;border-radius:3px;background:#c5504b;"></div>
<div class="pn" style="left:1143.4px;top:437px;width:36.6px;height:43.5px;border-radius:6px 0 0 6px;background:#2b2b2b;"></div>
<div class="pn" style="left:1143.4px;top:485.5px;width:36.6px;height:175.5px;border-radius:6px 0 0 6px;background:#2b2b2b;"></div>
<div class="pn" style="left:1143.4px;top:666px;width:36.6px;height:87.5px;border-radius:6px 0 0 6px;background:#2b2b2b;"></div>
<div class="pn" style="left:1146.8px;top:717px;width:29.7px;height:30px;border-radius:2px;background:#000;"></div>
<div class="pn" style="left:1150px;top:721px;width:23.3px;height:22px;border-radius:0;background:#fff;"></div>
<div class="pn" style="left:463.2px;top:875px;width:254px;height:5.2px;border-radius:3px;background:#fff;"></div>
<div class="pn" style="left:48.8px;top:49.8px;width:36.6px;height:3.8px;border-radius:2px;background:#2c2c2c;"></div>
<div class="pn" style="left:48.8px;top:49.8px;width:11.5px;height:3.8px;border-radius:2px;background:#cfcfcf;"></div>
<div class="pn" style="left:48.4px;top:68.8px;width:107.6px;height:1px;border-radius:0;background:#3c3c3c;"></div>
<svg id="ico" width="1180" height="885" viewBox="0 0 1180 885"><g transform="translate(18.3,18.3)" fill="none" stroke="#fff" stroke-width="1.5" stroke-linecap="round" stroke-linejoin="round" ><rect x="-6.2" y="0.8" width="12.4" height="6" rx=".8"/><path d="M-6,3.8H6"/><path d="M-3.2,0.5V-3 M3.2,0.5V-3"/><path d="M-3.2,-2.6c-2.6,-.4 -2.6,-3.6 0,-4.4c2.6,.8 2.6,4 0,4.4z M3.2,-2.6c-2.6,-.4 -2.6,-3.6 0,-4.4c2.6,.8 2.6,4 0,4.4z" stroke-width="1.1"/></g>
<g transform="translate(55.7,18.3)" fill="none" stroke="#fff" stroke-width="1.5" stroke-linecap="round" stroke-linejoin="round" ><path d="M-6.3,5.5V-4.6a.9,.9 0 0 1 .9,-.9h3.2l1.6,1.8h5.2a.9,.9 0 0 1 .9,.9V-1"/><path d="M-6.3,5.5l1.9,-5.6a1,1 0 0 1 .9,-.7h9.3a.6,.6 0 0 1 .6,.8l-1.7,4.8a1,1 0 0 1 -.9,.7z"/></g>
<rect x="56.6" y="29.099999999999998" width="4" height="1.2" rx=".6" fill="#777"/>
<g transform="translate(92.3,18.3)" fill="none" stroke="#fff" stroke-width="1.5" stroke-linecap="round" stroke-linejoin="round" ><circle cx="-4.4" cy="0" r="2"/><circle cx="4.2" cy="-4.8" r="2"/><circle cx="4.2" cy="4.8" r="2"/><path d="M-2.6,-1L2.4,-3.8M-2.6,1L2.4,3.8"/></g>
<g transform="translate(129,18.3)" fill="none" stroke="#fff" stroke-width="1.3" stroke-linecap="round" stroke-linejoin="round" ><polygon points="3.03,-1.65 0.00,0.10 -3.03,-1.65 -3.03,-5.15 -0.00,-6.90 3.03,-5.15"/><path d="M0,-3.4v3.5M0,-3.4l-3,-1.75M0,-3.4l3,-1.75" stroke-width=".9"/><polygon points="-0.47,4.45 -3.50,6.20 -6.53,4.45 -6.53,0.95 -3.50,-0.80 -0.47,0.95"/><path d="M-3.5,2.7v3.5M-3.5,2.7l-3,-1.75M-3.5,2.7l3,-1.75" stroke-width=".9"/><polygon points="6.53,4.45 3.50,6.20 0.47,4.45 0.47,0.95 3.50,-0.80 6.53,0.95"/><path d="M3.5,2.7v3.5M3.5,2.7l-3,-1.75M3.5,2.7l3,-1.75" stroke-width=".9"/></g>
<rect x="130.4" y="29.099999999999998" width="4" height="1.2" rx=".6" fill="#777"/>
<g transform="translate(166.3,18.3)" fill="none" stroke="#fff" stroke-width="1.4" stroke-linecap="round" stroke-linejoin="round" ><circle r="6.6" stroke-width="1.5"/><path d="M-5.5,-3.6H5.5M-3.6,-5.5V5.5" stroke-width="1.25"/><path d="M-6.5,-1.2H6.5M-1.2,-6.5V6.5" stroke-width="1.25"/><path d="M-6.5,1.2H6.5M1.2,-6.5V6.5" stroke-width="1.25"/><path d="M-5.5,3.6H5.5M3.6,-5.5V5.5" stroke-width="1.25"/></g>
<g transform="translate(202.8,18.3)" fill="none" stroke="#fff" stroke-width="1.5" stroke-linecap="round" stroke-linejoin="round" ><circle r="2.6"/><path d="M4.50,0.00L6.60,0.00"/><path d="M3.18,3.18L4.67,4.67"/><path d="M0.00,4.50L0.00,6.60"/><path d="M-3.18,3.18L-4.67,4.67"/><path d="M-4.50,0.00L-6.60,0.00"/><path d="M-3.18,-3.18L-4.67,-4.67"/><path d="M-0.00,-4.50L-0.00,-6.60"/><path d="M3.18,-3.18L4.67,-4.67"/></g>
<g transform="translate(239.4,18.3)" fill="none" stroke="#fff" stroke-width="1.4" stroke-linecap="round" stroke-linejoin="round" ><circle r="6.6" stroke-width="1.5"/><circle r="2.2" stroke-width="1.1"/><path d="M2.27,0.40L1.60,5.99" stroke-width="1.2"/><path d="M0.79,2.16L-4.38,4.38" stroke-width="1.2"/><path d="M-1.48,1.76L-5.99,-1.60" stroke-width="1.2"/><path d="M-2.27,-0.40L-1.60,-5.99" stroke-width="1.2"/><path d="M-0.79,-2.16L4.38,-4.38" stroke-width="1.2"/><path d="M1.48,-1.76L5.99,1.60" stroke-width="1.2"/></g>
<g transform="translate(276.5,18.3)" fill="none" stroke="#fff" stroke-width="1.5" stroke-linecap="round" stroke-linejoin="round" ><rect x="-6.4" y="-5.6" width="12.8" height="11.2" rx=".8"/><path d="M-6,4.2L-1.6,-.6L2.4,3.6M0.8,2L3.2,-.4L6,2.6" stroke-width="1.3"/><circle cx="3" cy="-2.8" r=".8" fill="#fff" stroke="none"/></g>
<g transform="translate(313,18.3)" fill="none" stroke="#fff" stroke-width="1.5" stroke-linecap="round" stroke-linejoin="round" ><rect x="-6.8" y="-3.6" width="9.6" height="7.2" rx="1.4"/><path d="M2.8,-1L6.6,-3.2V3.2L2.8,1"/></g>
<g transform="translate(829.8,18.3)" fill="none" stroke="#fff" stroke-width="1.4" stroke-linecap="round" stroke-linejoin="round" ><path d="M-7.6,1.6A8,3.3 -16 0 1 7.6,-2.2" stroke-width="1.2"/><polygon points="4.68,2.50 0.00,5.20 -4.68,2.50 -4.68,-2.90 -0.00,-5.60 4.68,-2.90" stroke-width="1.3" fill="#2a2a2b"/><path d="M0,-.2v5.4M0,-.2l-4.7,-2.7M0,-.2l4.7,-2.7" stroke-width="1.1"/><path d="M7.6,-2.2A8,3.3 -16 0 1 -7.6,1.6" stroke-width="1.3"/></g>
<defs><radialGradient id="ball" cx=".38" cy=".3" r=".75"><stop offset="0" stop-color="#fff"/><stop offset=".55" stop-color="#d6d6d6"/><stop offset="1" stop-color="#8a8a8a"/></radialGradient><radialGradient id="ballw" cx=".4" cy=".32" r=".75"><stop offset="0" stop-color="#fff"/><stop offset=".6" stop-color="#efefef"/><stop offset="1" stop-color="#9a9a9a"/></radialGradient><radialGradient id="ballp" cx=".4" cy=".32" r=".75"><stop offset="0" stop-color="#fff"/><stop offset=".6" stop-color="#f3d6da"/><stop offset="1" stop-color="#b07a84"/></radialGradient></defs>
<g transform="translate(866,17.7) scale(1.0)"><circle r="9.2" fill="url(#ball)"/><path d="M-6,-1C-6.2,-4.6 -2.4,-6 .4,-4.4C1.6,-3.6 1.4,-1.8 3,-1.6C4.6,-1.4 5.6,-2.6 6,-3.6C7.2,-.6 5.6,3 1.4,3.6C-2.6,4 -5.8,2.2 -6,-1Z" fill="#646464"/><path d="M-5.6,.2C-3.6,3.4 2.6,3.6 6,-2.2" fill="none" stroke="#3a3a3a" stroke-width="1.1" opacity=".55"/><path d="M1,-6.6C3.4,-7 5.6,-5.6 6,-3.6C5.4,-2.4 4.2,-1.6 3,-1.8C1.8,-2 1.6,-3.4 .6,-4.4Z" fill="#fff" opacity=".95"/></g>
<circle cx="875.4" cy="27.6" r="3.4" fill="#333" stroke="#8a8a8a" stroke-width="1"/><circle cx="875.4" cy="27.6" r="1.2" fill="#8a8a8a"/>
<g transform="translate(903.9,18.3)" fill="none" stroke="#fff" stroke-width="1.4" stroke-linecap="round" stroke-linejoin="round" ><path d="M5.6,-5.6a1.7,1.7 0 0 1 0,2.4L-.6,3L-3,.6L3.2,-5.6a1.7,1.7 0 0 1 2.4,0z"/><path d="M-.6,3L-4.8,5.2Q-5.8,5.8 -5.2,4.8L-3,.6"/></g>
<rect x="904.8" y="29.0" width="4" height="1.2" rx=".6" fill="#777"/>
<g transform="translate(940,18.3)" fill="none" stroke="#fff" stroke-width="1.6" stroke-linecap="round" stroke-linejoin="round" ><path d="M.6,-6.8L6.8,-.6L2.6,3.6L-3.6,-2.6Z"/><path d="M-1.6,-.6L-5,2.8a1.8,1.8 0 0 0 0,2.5a1.8,1.8 0 0 0 2.5,0L.9,1.9"/><path d="M2.2,-4.6L3.6,-3.2M4,-2.8L4.8,-2" stroke-width="1.2"/></g>
<g transform="translate(977,18.3)" fill="none" stroke="#fff" stroke-width="1.4" stroke-linecap="round" stroke-linejoin="round" ><path d="M-1,-6.2V5.4H-6.2Z" stroke-width="1.3"/><path d="M1,-6.2V5.4H6.2Z" fill="#fff" stroke-width="1.3"/></g>
<g transform="translate(1014.2,18.3)" fill="none" stroke="#fff" stroke-width="1.5" stroke-linecap="round" stroke-linejoin="round" ><path d="M-2,-6.2h4M-1.4,-6.2V-1.6L-5.8,4.6a.9,.9 0 0 0 .7,1.4H5.1a.9,.9 0 0 0 .7,-1.4L1.4,-1.6V-6.2"/><path d="M-3.6,2H3.6" stroke-width="1.2"/></g>
<g transform="translate(1050.9,18.3)" fill="none" stroke="#fff" stroke-width="1.4" stroke-linecap="round" stroke-linejoin="round" ><path d="M0,-6.2L6.2,-3L0,.2L-6.2,-3Z"/><path d="M-6.2,.2L0,3.4L6.2,.2M-6.2,3.2L0,6.4L6.2,3.2"/></g>
<g transform="translate(1087.4,18.3)" fill="none" stroke="#fff" stroke-width="1.4" stroke-linecap="round" stroke-linejoin="round" ><polygon points="5.72,3.30 0.00,6.60 -5.72,3.30 -5.72,-3.30 -0.00,-6.60 5.72,-3.30" stroke-width="1.6" stroke-linejoin="round"/><circle r="2.4" stroke-width="1.5"/></g>
<g transform="translate(1125,18.3)" fill="none" stroke="#fff" stroke-width="1.4" stroke-linecap="round" stroke-linejoin="round" ><path d="M-6,-4.6H6M-6,0H6M-6,4.6H6" stroke-width="1.5"/><path d="M2.4,-6.4L5.6,-4.6L2.4,-2.8ZM-2.4,-1.8L-5.6,0L-2.4,1.8ZM2.4,2.8L5.6,4.6L2.4,6.4Z" fill="#fff" stroke-width=".6"/></g>
<rect x="1126.4" y="29.0" width="4" height="1.2" rx=".6" fill="#777"/>
<g fill="#fff"><path d="M1154.3,21.4C1154,19.6 1155.4,18.6 1156.4,18.4C1157.2,17 1159,16.8 1160,17.8C1161.2,18.4 1161.8,19.8 1161.6,21.4Z"/><path d="M1159.6,18.6C1159,16.6 1160.6,15.4 1162,15.6C1163.2,14.2 1165.8,14.2 1166.8,16C1168.4,16.4 1169.2,18.2 1168.6,20.2H1162.2C1161.6,19.4 1160.6,18.8 1159.6,18.6Z"/></g><path d="M1161,17.6C1162.6,16.2 1165.4,16.4 1166.6,17.6" fill="none" stroke="#555" stroke-width=".7"/>
<g transform="translate(22.5,61.4)" fill="none" stroke="#fff" stroke-width="1.9" stroke-linecap="round" stroke-linejoin="round" ><rect x="-6.6" y="-6.4" width="13.2" height="12.8" rx="1"/><path d="M-2.2,-6.4V6.4M2.2,-6.4V6.4M-6.6,-2.1H6.6M-6.6,2.1H6.6"/></g>
<g transform="translate(22,109)"><path d="M-6.8,-6C-3,-7.4 3,-7.4 7.2,-6.2L7.4,1.2L-7.2,1.6Z" fill="#f3d868"/><path d="M-7.2,-.6L1.4,1L0.6,7.2L-7.8,6.6Z" fill="#e9573c"/><path d="M1.4,1L7.4,-.2L7.6,6.4L0.6,7.2Z" fill="#35a3a0"/><path d="M-3.4,7L-.2,3.6L2.6,7.1Z" fill="#3b6fd8"/></g>
<g transform="translate(22,157) scale(1.0108695652173914)"><circle r="9.2" fill="url(#ball)"/><path d="M-6,-1C-6.2,-4.6 -2.4,-6 .4,-4.4C1.6,-3.6 1.4,-1.8 3,-1.6C4.6,-1.4 5.6,-2.6 6,-3.6C7.2,-.6 5.6,3 1.4,3.6C-2.6,4 -5.8,2.2 -6,-1Z" fill="#646464"/><path d="M-5.6,.2C-3.6,3.4 2.6,3.6 6,-2.2" fill="none" stroke="#3a3a3a" stroke-width="1.1" opacity=".55"/><path d="M1,-6.6C3.4,-7 5.6,-5.6 6,-3.6C5.4,-2.4 4.2,-1.6 3,-1.8C1.8,-2 1.6,-3.4 .6,-4.4Z" fill="#fff" opacity=".95"/></g>
<g transform="translate(22,203.5) scale(1.0108695652173914)"><circle r="9.2" fill="url(#ball)"/><path d="M-6,-1C-6.2,-4.6 -2.4,-6 .4,-4.4C1.6,-3.6 1.4,-1.8 3,-1.6C4.6,-1.4 5.6,-2.6 6,-3.6C7.2,-.6 5.6,3 1.4,3.6C-2.6,4 -5.8,2.2 -6,-1Z" fill="#646464"/><path d="M-5.6,.2C-3.6,3.4 2.6,3.6 6,-2.2" fill="none" stroke="#3a3a3a" stroke-width="1.1" opacity=".55"/><path d="M1,-6.6C3.4,-7 5.6,-5.6 6,-3.6C5.4,-2.4 4.2,-1.6 3,-1.8C1.8,-2 1.6,-3.4 .6,-4.4Z" fill="#fff" opacity=".95"/></g>
<g transform="translate(22,250) scale(1.0108695652173914)"><circle r="9.2" fill="url(#ball)"/><path d="M-6,-1C-6.2,-4.6 -2.4,-6 .4,-4.4C1.6,-3.6 1.4,-1.8 3,-1.6C4.6,-1.4 5.6,-2.6 6,-3.6C7.2,-.6 5.6,3 1.4,3.6C-2.6,4 -5.8,2.2 -6,-1Z" fill="#646464"/><path d="M-5.6,.2C-3.6,3.4 2.6,3.6 6,-2.2" fill="none" stroke="#3a3a3a" stroke-width="1.1" opacity=".55"/><path d="M1,-6.6C3.4,-7 5.6,-5.6 6,-3.6C5.4,-2.4 4.2,-1.6 3,-1.8C1.8,-2 1.6,-3.4 .6,-4.4Z" fill="#fff" opacity=".95"/></g>
<g transform="translate(22,297) scale(1.0108695652173914)"><circle r="9.2" fill="url(#ball)"/><path d="M-6,-1C-6.2,-4.6 -2.4,-6 .4,-4.4C1.6,-3.6 1.4,-1.8 3,-1.6C4.6,-1.4 5.6,-2.6 6,-3.6C7.2,-.6 5.6,3 1.4,3.6C-2.6,4 -5.8,2.2 -6,-1Z" fill="#646464"/><path d="M-5.6,.2C-3.6,3.4 2.6,3.6 6,-2.2" fill="none" stroke="#3a3a3a" stroke-width="1.1" opacity=".55"/><path d="M1,-6.6C3.4,-7 5.6,-5.6 6,-3.6C5.4,-2.4 4.2,-1.6 3,-1.8C1.8,-2 1.6,-3.4 .6,-4.4Z" fill="#fff" opacity=".95"/></g>
<g transform="translate(22,344.6)"><circle r="9.3" fill="url(#ballw)"/><ellipse cx="3.4" cy="-2.2" rx="5" ry="7" transform="rotate(-38 3.4 -2.2)" fill="#3c3c3c"/><ellipse cx="4" cy="-1.6" rx="3.6" ry="5.8" transform="rotate(-38 4 -1.6)" fill="#5a5a5a"/></g>
<g transform="translate(22,391.5)"><circle r="9.3" fill="url(#ballw)"/><ellipse cx="3.4" cy="-2.2" rx="5" ry="7" transform="rotate(-38 3.4 -2.2)" fill="#3c3c3c"/><ellipse cx="4" cy="-1.6" rx="3.6" ry="5.8" transform="rotate(-38 4 -1.6)" fill="#5a5a5a"/></g>
<g transform="translate(22,438.5)"><circle r="9.3" fill="url(#ballw)"/><ellipse cx="3.4" cy="-2.2" rx="5" ry="7" transform="rotate(-38 3.4 -2.2)" fill="#3c3c3c"/><ellipse cx="4" cy="-1.6" rx="3.6" ry="5.8" transform="rotate(-38 4 -1.6)" fill="#5a5a5a"/></g>
<g transform="translate(22,485.7)"><circle r="9.3" fill="url(#ballw)"/><path d="M-4.6,-.6C-3,2.6 2.6,3 4.8,-3" fill="none" stroke="#333" stroke-width="1.7" stroke-linecap="round"/></g>
<g transform="translate(22,533)"><circle r="9.3" fill="url(#ballw)"/><path d="M-4.6,-.6C-3,2.6 2.6,3 4.8,-3" fill="none" stroke="#333" stroke-width="1.7" stroke-linecap="round"/></g>
<g transform="translate(22,580)"><circle r="9.3" fill="url(#ballw)"/><path d="M-4.6,-.6C-3,2.6 2.6,3 4.8,-3" fill="none" stroke="#333" stroke-width="1.7" stroke-linecap="round"/></g>
<g transform="translate(22,627.5)"><circle r="9.3" fill="url(#ballw)"/><circle cx="4.6" cy="-5" r="4.2" fill="#7c7c7c"/><path d="M0.39999999999999947,-3.6A5.2,5.2 0 0 0 6.0,-0.19999999999999984" fill="none" stroke="#555" stroke-width="1" opacity=".7"/></g>
<g transform="translate(22,675)"><circle r="9.3" fill="url(#ballw)"/><circle cx="5.4" cy="-5.8" r="3.6" fill="#7c7c7c"/><path d="M1.8000000000000003,-4.4A4.6,4.6 0 0 0 6.800000000000001,-1.5999999999999996" fill="none" stroke="#555" stroke-width="1" opacity=".7"/></g>
<g transform="translate(22,770)"><circle r="9.3" fill="url(#ballw)"/><circle cx="4.4" cy="-5.2" r="4.4" fill="#7c7c7c"/><path d="M0.0,-3.8000000000000003A5.4,5.4 0 0 0 5.800000000000001,-0.19999999999999984" fill="none" stroke="#555" stroke-width="1" opacity=".7"/></g>
<g transform="translate(22,722)"><polygon points="8.87,0.00 8.63,2.53 7.91,5.08 5.82,6.72 3.71,8.13 1.28,8.93 -1.22,8.49 -3.71,8.13 -5.94,6.86 -7.79,5.00 -8.13,2.39 -8.71,0.00 -8.13,-2.39 -7.80,-5.01 -5.99,-6.91 -3.50,-7.66 -1.35,-9.37 1.34,-9.35 3.78,-8.28 5.93,-6.84 7.19,-4.62 8.05,-2.36" fill="#f4f4f4" stroke="#bdbdbd" stroke-width=".8"/><circle cx="-0.4" cy="-0.1" r="0.7" fill="#9a9a9a" opacity=".7"/><circle cx="0.0" cy="0.2" r="0.9" fill="#9a9a9a" opacity=".7"/><circle cx="-5.5" cy="2.2" r="1.0" fill="#9a9a9a" opacity=".7"/><circle cx="-2.2" cy="-2.7" r="1.1" fill="#9a9a9a" opacity=".7"/><circle cx="-1.9" cy="0.5" r="1.4" fill="#9a9a9a" opacity=".7"/><circle cx="5.9" cy="-0.2" r="1.1" fill="#9a9a9a" opacity=".7"/><circle cx="-0.6" cy="1.5" r="0.8" fill="#9a9a9a" opacity=".7"/><circle cx="4.8" cy="2.3" r="0.9" fill="#9a9a9a" opacity=".7"/><circle cx="1.5" cy="-2.2" r="1.4" fill="#9a9a9a" opacity=".7"/><circle cx="0.0" cy="-0.0" r="0.7" fill="#9a9a9a" opacity=".7"/><circle cx="2.8" cy="-1.8" r="1.4" fill="#9a9a9a" opacity=".7"/><circle cx="-0.4" cy="0.3" r="1.1" fill="#9a9a9a" opacity=".7"/><circle cx="0.3" cy="-1.9" r="0.6" fill="#9a9a9a" opacity=".7"/><circle cx="-3.3" cy="5.8" r="1.2" fill="#9a9a9a" opacity=".7"/><circle cx="1.3" cy="1.2" r="0.6" fill="#9a9a9a" opacity=".7"/><circle cx="5.2" cy="2.0" r="0.7" fill="#9a9a9a" opacity=".7"/></g>
<clipPath id="lpclip"><rect x="0" y="800" width="44" height="22"/></clipPath><g clip-path="url(#lpclip)"><circle cx="22" cy="815" r="8.6" fill="url(#ballp)"/><path d="M17.6,814.6C19.4,817.6 24.4,817.8 26.4,812.4" fill="none" stroke="#a04a5a" stroke-width="1.6" stroke-linecap="round"/></g>
<path d="M49.5,802V815C49.5,823 44,826.5 38,826.6H24" fill="none" stroke="#4a554a" stroke-width="1.6" stroke-dasharray="1.2 3.2" stroke-linecap="round"/>
<clipPath id="nbc"><circle cx="74.5" cy="792.5" r="23.5"/></clipPath><g clip-path="url(#nbc)"><rect x="50" y="768" width="50" height="50" fill="#d04545"/><path d="M74.5,792.5L100,765V820Z" fill="#f25c5c"/><path d="M48,766H101L91,778H58Z" fill="#70e272"/><path d="M48,819H101L90,806.5H59Z" fill="#3e9e46"/><rect x="57.2" y="775.2" width="34" height="33.4" rx="10.5" fill="#8199f2"/></g>
<g transform="translate(115.8,778)" fill="none" stroke="#fff" stroke-width="1.5" stroke-linecap="round" stroke-linejoin="round" ><path d="M-4.8,-1.8V-4.4H-2M2,-4.4H4.8V-1.8M4.8,1.8V4.4H2M-2,4.4H-4.8V1.8"/></g>
<g transform="translate(139.3,778)" fill="none" stroke="#fff" stroke-width="1.4" stroke-linecap="round" stroke-linejoin="round" ><rect x="-4.6" y="-.6" width="9.2" height="5.4" rx="1"/><path d="M-2.6,-.8V-2.4a2.6,2.6 0 0 1 5.2,0V-.8"/></g>
<g transform="translate(116,807.8)" fill="none" stroke="#fff" stroke-width="1.4" stroke-linecap="round" stroke-linejoin="round" ><path d="M-5.2,-.2L0,-4.6L5.2,-.2M-3.8,-1V4.4H-1.4V1.2H1.4V4.4H3.8V-1"/></g>
<g transform="translate(18.3,842.9)" fill="none" stroke="#fff" stroke-width="1.6" stroke-linecap="round" stroke-linejoin="round" ><path d="M5.2,5.8V0.6a2.2,2.2 0 0 0 -2.2,-2.2H-5M-1.8,-5L-5.2,-1.6L-1.8,1.8"/></g>
<g transform="translate(55,842.9)" fill="none" stroke="#3b3b3b" stroke-width="1.6" stroke-linecap="round" stroke-linejoin="round" ><path d="M-5.2,5.8V0.6a2.2,2.2 0 0 1 2.2,-2.2H5M1.8,-5L5.2,-1.6L1.8,1.8"/></g>
<g transform="translate(92,842.9)" fill="none" stroke="#fff" stroke-width="1.4" stroke-linecap="round" stroke-linejoin="round" ><path d="M-4.8,-6.2H4a.8,.8 0 0 1 .8,.8V6.2H-3.2a1.6,1.6 0 0 1 0,-3.2H4.8M-4.8,4.6V-6.2"/><path d="M-2.4,-3.6H2.6M-2.4,-1.2H2.6" stroke-width="1.2"/></g>
<g transform="translate(129.3,842.9)" fill="none" stroke="#fff" stroke-width="1.6" stroke-linecap="round" stroke-linejoin="round" ><circle cx="1.8" cy="-1.8" r="4.2"/><path d="M-1.2,1.2L-6,6"/></g>
<g transform="translate(166,842.9)" fill="none" stroke="#fff" stroke-width="1.4" stroke-linecap="round" stroke-linejoin="round" ><path d="M-6,-5.4V1.6M6,-5.4V1.6"/><rect x="-6.4" y="-.6" width="5.4" height="5" rx="1.4"/><rect x="1" y="-.6" width="5.4" height="5" rx="1.4"/><path d="M-1,1.4Q0,.4 1,1.4"/></g>
<g transform="translate(203,842.9)" fill="none" stroke="#fff" stroke-width="1.3" stroke-linecap="round" stroke-linejoin="round" ><polygon points="3.03,-1.65 0.00,0.10 -3.03,-1.65 -3.03,-5.15 -0.00,-6.90 3.03,-5.15"/><path d="M0,-3.4v3.5M0,-3.4l-3,-1.75M0,-3.4l3,-1.75" stroke-width=".9"/><polygon points="-0.47,4.45 -3.50,6.20 -6.53,4.45 -6.53,0.95 -3.50,-0.80 -0.47,0.95"/><path d="M-3.5,2.7v3.5M-3.5,2.7l-3,-1.75M-3.5,2.7l3,-1.75" stroke-width=".9"/><polygon points="6.53,4.45 3.50,6.20 0.47,4.45 0.47,0.95 3.50,-0.80 6.53,0.95"/><path d="M3.5,2.7v3.5M3.5,2.7l-3,-1.75M3.5,2.7l3,-1.75" stroke-width=".9"/></g>
<g transform="translate(239.6,842.9)" fill="none" stroke="#fff" stroke-width="1.5" stroke-linecap="round" stroke-linejoin="round" ><path d="M-3.8,-5.2H3.8L6.6,5.2H-6.6Z"/><path d="M0,-5.2V5.2M-5,-.6H5" stroke-width="1.2"/></g>
<g transform="translate(276.3,842.9)" fill="none" stroke="#fff" stroke-width="1.4" stroke-linecap="round" stroke-linejoin="round" ><polygon points="5.72,3.30 0.00,6.60 -5.72,3.30 -5.72,-3.30 -0.00,-6.60 5.72,-3.30" stroke-width="1.4"/><polygon points="0,-3.2 3,2 -3,2" stroke-width="1"/><path d="M0,-6.6V-3.2M5.7,3.3L3,2M-5.7,3.3L-3,2M-5.7,-3.3L0,-3.2L5.7,-3.3M-5.7,-3.3L-3,2L0,6.6L3,2L5.7,-3.3" stroke-width="1"/></g>
<g transform="translate(313.4,842.9)" fill="none" stroke="#fff" stroke-width="1.4" stroke-linecap="round" stroke-linejoin="round" ><circle cx="1.6" cy="-1.6" r="5"/><path d="M-2,2L-6.2,6.2"/><circle cx="-.2" cy="-1.6" r="1.1" fill="#fff" stroke-width=".5"/><circle cx="3.4" cy="-1.6" r="1.1" fill="#fff" stroke-width=".5"/><path d="M-1.6,-1.6H5" stroke-width=".8"/></g>
<g transform="translate(350,842.9)" fill="none" stroke="#fff" stroke-width="1.5" stroke-linecap="round" stroke-linejoin="round" ><circle r="6.4"/><path d="M3.6,-2.6A4.4,4.4 0 0 1 -1.6,4" stroke-width="1.2"/></g>
<g transform="translate(387.3,842.9)" fill="none" stroke="#fff" stroke-width="1.4" stroke-linecap="round" stroke-linejoin="round" ><path d="M0,-6.2L7,5.6H-7Z"/><path d="M-3.4,2.2Q0,-1.4 3.4,2.2Q0,5 -3.4,2.2Z" stroke-width="1"/><circle cx="0" cy="2" r="1" fill="#fff" stroke="none"/></g>
<g transform="translate(423.9,842.9)" fill="none" stroke="#fff" stroke-width="0.8" stroke-linecap="round" stroke-linejoin="round" ><path d="M-5.6,-1.4L-.6,-4.6M1.4,-4.6L5.4,-2.6M-5.6,3.6H5.6" stroke-width="1.2"/><circle cx="-5.4" cy="-1.4" r="1.5" fill="#fff"/><circle cx=".4" cy="-4.8" r="1.5" fill="#fff"/><circle cx="5.4" cy="-2.4" r="1.5" fill="#fff"/><circle cx="-5.6" cy="3.6" r="1.5" fill="#fff"/><circle cx="-1.8" cy="3.6" r="1.5" fill="#fff"/><circle cx="1.8" cy="3.6" r="1.5" fill="#fff"/><circle cx="5.6" cy="3.6" r="1.5" fill="#fff"/></g>
<g transform="translate(461,842.9)" fill="none" stroke="#fff" stroke-width="1.5" stroke-linecap="round" stroke-linejoin="round" ><circle cx="0" cy="-2.8" r="3.2"/><path d="M-5.6,6A5.8,5.8 0 0 1 5.6,6"/></g>
<g transform="translate(497,842.9)" fill="none" stroke="#8d4a48" stroke-width="1.2" stroke-linecap="round" stroke-linejoin="round" ><circle cx="0" cy="-4.4" r="2"/><rect x="-3.6" y="-1.6" width="7.2" height="3.2" rx="1.6"/><rect x="-5.6" y="2.6" width="11.2" height="3.4" rx="1.7"/></g>
<circle cx="166" cy="831.2" r=".9" fill="#8a8a8a"/>
<circle cx="203" cy="831.2" r=".9" fill="#8a8a8a"/>
<circle cx="239.6" cy="831.2" r=".9" fill="#8a8a8a"/>
<circle cx="276.3" cy="831.2" r=".9" fill="#8a8a8a"/>
<circle cx="313.4" cy="831.2" r=".9" fill="#8a8a8a"/>
<g transform="translate(1161.7,114)" fill="none" stroke="#df5f58" stroke-width="1.2" stroke-linecap="round" stroke-linejoin="round" ><path d="M-1,-5.6V4.8H-5.6Z" stroke-width="1.2"/><path d="M1,-5.6V4.8H5.6Z" fill="#df5f58" stroke-width="1.2"/></g>
<text x="1173.5" y="106.5" font-family="Liberation Sans, sans-serif" font-size="4.2" fill="#8a4a48" text-anchor="middle">LINK</text>
<g transform="translate(1160.8,203)" fill="none" stroke="#8f8f8f" stroke-width="1.2" stroke-linecap="round" stroke-linejoin="round" ><circle r="6"/><circle r="1.4" fill="#9a9a9a" stroke="none"/></g>
<g transform="translate(1161.7,322)" fill="none" stroke="#f08c84" stroke-width="0.5" stroke-linecap="round" stroke-linejoin="round" ><path d="M1,-5.6L-2.6,.6H.4L-1,5.6L2.6,-.8H-.2Z" fill="#f08c84" stroke-width=".5"/></g>
<g transform="translate(1161.7,453.4)" fill="none" stroke="#fff" stroke-width="1.5" stroke-linecap="round" stroke-linejoin="round" ><path d="M0,-6.4V2.4M-2.8,-.2L0,2.6L2.8,-.2M-5,2.4A5,4.2 0 0 0 5,2.4"/></g>
<g transform="translate(1161.7,501.2)"><polygon points="9.16,0.00 8.91,2.62 8.16,5.25 6.01,6.94 3.83,8.39 1.33,9.22 -1.26,8.76 -3.83,8.40 -6.13,7.08 -8.04,5.17 -8.39,2.46 -8.99,0.00 -8.39,-2.46 -8.05,-5.18 -6.18,-7.13 -3.61,-7.90 -1.39,-9.67 1.39,-9.65 3.90,-8.54 6.12,-7.07 7.42,-4.77 8.31,-2.44" fill="#f4f4f4" stroke="#bdbdbd" stroke-width=".8"/><circle cx="-0.4" cy="-0.1" r="0.7" fill="#9a9a9a" opacity=".7"/><circle cx="0.0" cy="0.2" r="0.9" fill="#9a9a9a" opacity=".7"/><circle cx="-5.6" cy="2.2" r="1.0" fill="#9a9a9a" opacity=".7"/><circle cx="-2.3" cy="-2.8" r="1.1" fill="#9a9a9a" opacity=".7"/><circle cx="-1.9" cy="0.5" r="1.4" fill="#9a9a9a" opacity=".7"/><circle cx="6.0" cy="-0.2" r="1.1" fill="#9a9a9a" opacity=".7"/><circle cx="-0.7" cy="1.5" r="0.8" fill="#9a9a9a" opacity=".7"/><circle cx="5.0" cy="2.4" r="0.9" fill="#9a9a9a" opacity=".7"/><circle cx="1.6" cy="-2.3" r="1.4" fill="#9a9a9a" opacity=".7"/><circle cx="0.0" cy="-0.0" r="0.7" fill="#9a9a9a" opacity=".7"/><circle cx="2.9" cy="-1.8" r="1.4" fill="#9a9a9a" opacity=".7"/><circle cx="-0.4" cy="0.3" r="1.1" fill="#9a9a9a" opacity=".7"/><circle cx="0.3" cy="-1.9" r="0.6" fill="#9a9a9a" opacity=".7"/><circle cx="-3.4" cy="6.0" r="1.2" fill="#9a9a9a" opacity=".7"/><circle cx="1.3" cy="1.2" r="0.6" fill="#9a9a9a" opacity=".7"/><circle cx="5.3" cy="2.1" r="0.7" fill="#9a9a9a" opacity=".7"/></g>
<g transform="translate(1161.7,546)" fill="none" stroke="#857666" stroke-width="1.2" stroke-linecap="round" stroke-linejoin="round" ><path d="M0,-8L6.6,-5.6V-.4C6.6,3.8 3.6,6.8 0,8.2C-3.6,6.8 -6.6,3.8 -6.6,-.4V-5.6Z"/><path d="M-3,3.2L2.6,-2.6M1.6,-3.6L3.6,-1.6" stroke-width="1.6"/></g>
<g transform="translate(1161.7,589.7)" fill="none" stroke="#86b6dc" stroke-width="1.3" stroke-linecap="round" stroke-linejoin="round" ><circle cx="-2.5" cy="-7.5" r=".85" fill="#dfe9f2" stroke="none"/><circle cx="0.0" cy="-7.5" r=".85" fill="#dfe9f2" stroke="none"/><circle cx="2.5" cy="-7.5" r=".85" fill="#dfe9f2" stroke="none"/><circle cx="-2.5" cy="-5.0" r=".85" fill="#dfe9f2" stroke="none"/><circle cx="0.0" cy="-5.0" r=".85" fill="#dfe9f2" stroke="none"/><circle cx="2.5" cy="-5.0" r=".85" fill="#dfe9f2" stroke="none"/><circle cx="5.0" cy="-5.0" r=".85" fill="#dfe9f2" stroke="none"/><circle cx="-7.5" cy="-2.5" r=".85" fill="#dfe9f2" stroke="none"/><circle cx="-5.0" cy="-2.5" r=".85" fill="#dfe9f2" stroke="none"/><circle cx="0.0" cy="-2.5" r=".85" fill="#dfe9f2" stroke="none"/><circle cx="2.5" cy="-2.5" r=".85" fill="#dfe9f2" stroke="none"/><circle cx="5.0" cy="-2.5" r=".85" fill="#dfe9f2" stroke="none"/><circle cx="7.5" cy="-2.5" r=".85" fill="#dfe9f2" stroke="none"/><circle cx="-7.5" cy="0.0" r=".85" fill="#dfe9f2" stroke="none"/><circle cx="-5.0" cy="0.0" r=".85" fill="#dfe9f2" stroke="none"/><circle cx="-2.5" cy="0.0" r=".85" fill="#dfe9f2" stroke="none"/><circle cx="2.5" cy="0.0" r=".85" fill="#dfe9f2" stroke="none"/><circle cx="5.0" cy="0.0" r=".85" fill="#dfe9f2" stroke="none"/><circle cx="7.5" cy="0.0" r=".85" fill="#dfe9f2" stroke="none"/><circle cx="-7.5" cy="2.5" r=".85" fill="#dfe9f2" stroke="none"/><circle cx="-5.0" cy="2.5" r=".85" fill="#dfe9f2" stroke="none"/><circle cx="-2.5" cy="2.5" r=".85" fill="#dfe9f2" stroke="none"/><circle cx="0.0" cy="2.5" r=".85" fill="#dfe9f2" stroke="none"/><circle cx="5.0" cy="2.5" r=".85" fill="#dfe9f2" stroke="none"/><circle cx="7.5" cy="2.5" r=".85" fill="#dfe9f2" stroke="none"/><circle cx="-5.0" cy="5.0" r=".85" fill="#dfe9f2" stroke="none"/><circle cx="-2.5" cy="5.0" r=".85" fill="#dfe9f2" stroke="none"/><circle cx="0.0" cy="5.0" r=".85" fill="#dfe9f2" stroke="none"/><circle cx="2.5" cy="5.0" r=".85" fill="#dfe9f2" stroke="none"/><circle cx="-2.5" cy="7.5" r=".85" fill="#dfe9f2" stroke="none"/><circle cx="0.0" cy="7.5" r=".85" fill="#dfe9f2" stroke="none"/><circle cx="2.5" cy="7.5" r=".85" fill="#dfe9f2" stroke="none"/><circle r="5.2" stroke-width="1.3"/><path d="M-8,-8L8,8" stroke-width="1.3"/></g>
<g transform="translate(1161.7,633.6)" fill="none" stroke="#fff" stroke-width="1.4" stroke-linecap="round" stroke-linejoin="round" ><circle r="9" stroke="#a87a5c" stroke-width="1.2"/><path d="M0,-7V1.6" stroke="#bbb" stroke-width="1.1"/><path d="M-5.4,1.4A5.6,4.6 0 0 0 5.4,1.4" stroke="#a87a5c" stroke-width="1"/><path d="M-3.6,1.8H0" stroke="#4ec06a" stroke-width="1.4"/><path d="M0,1.8H3.6" stroke="#d85050" stroke-width="1.4"/><circle cx="0" cy="-3.2" r="1" fill="#bbb" stroke="none"/></g>
<g transform="translate(1161.7,687.8) scale(1.22)"><path d="M-7.4,-4.6L-1.4,-8.4L7.6,-5.6L7.8,4.4L1.2,8.6L-7,5.4Z" fill="#565857"/><path d="M-7.4,-4.6L1,-2L7.6,-5.6M1,-2L1.2,8.6" fill="none" stroke="#3c3e3d" stroke-width="1"/><path d="M-7.4,-4.6L-1.4,-8.4L7.6,-5.6L1,-2Z" fill="#6a6c6b"/><path d="M-11.4,9.6L12,-11" stroke="#d24c62" stroke-width="1.5" stroke-linecap="round"/></g>
<circle cx="1145" cy="732" r=".7" fill="#666"/>
<circle cx="584.6" cy="8.4" r="1.5" fill="#9a9a9a"/>
<circle cx="590" cy="8.4" r="1.5" fill="#9a9a9a"/>
<circle cx="595.4" cy="8.4" r="1.5" fill="#9a9a9a"/>
<path d="M53,76.6L57.6,82.8H48.4Z" fill="none" stroke="#eee" stroke-width="1"/><path d="M50.7,79.7H55.3L53,82.8ZM51.8,78.2h2.4" fill="none" stroke="#eee" stroke-width=".8"/></svg>
<div class="tx" style="left:92.9px;top:48.0px;font-size:8.21px;color:#858585;">2.17 GB / 7.38 GB</div>
<div class="tx" style="left:48.8px;top:57.0px;font-size:8.26px;color:#8f8f8f;">Scene vertices:</div>
<div class="tx" style="left:113.2px;top:57.0px;font-size:8.26px;color:#a0a0a0;">11.3M</div>
<div class="tx" style="left:60.3px;top:75.0px;font-size:8.21px;color:#f4f4f4;">Asian face 7 -</div>
<div class="tx" style="left:113.9px;top:75.0px;font-size:8.21px;color:#777;">2.04M</div>
<div class="tx" style="left:0.0px;top:-4.0px;font-size:10.5px;color:#8c8c8c;left:1152px;top:835.5px;width:18px;text-align:center;">2.8</div>
<div class="tx" style="left:0.0px;top:-4.0px;font-size:10.5px;color:#8c8c8c;left:1150px;top:848.5px;width:22px;text-align:center;">iPad</div>
<div class="lb" style="left:-37.8px;top:71.2px;font-size:8.46px;color:#f2f2f2;">Quad</div>
<div class="lb" style="left:-38.0px;top:80.1px;font-size:8.52px;color:#f2f2f2;">Remesher</div>
<div class="lb" style="left:-38.0px;top:123.1px;font-size:8.2px;color:#8cc2ee;background:#15202e;width:44px;left:0;">Face Group</div>
<div class="lb" style="left:-37.7px;top:170.2px;font-size:8.15px;color:#f2f2f2;">Clay</div>
<div class="lb" style="left:-37.9px;top:217.6px;font-size:6.24px;color:#f2f2f2;">RA_Clay_Rock</div>
<div class="lb" style="left:-37.9px;top:260.3px;font-size:7.45px;color:#f2f2f2;">RA_Clay_Pla</div>
<div class="lb" style="left:-37.9px;top:269.0px;font-size:8.16px;color:#f2f2f2;">ster</div>
<div class="lb" style="left:-37.6px;top:311.8px;font-size:8.58px;color:#f2f2f2;">Brush</div>
<div class="lb" style="left:-37.6px;top:359.0px;font-size:8.64px;color:#b5dd78;">Flatten</div>
<div class="lb" style="left:-37.5px;top:405.8px;font-size:7.94px;color:#b5dd78;">RA_Flatten</div>
<div class="lb" style="left:-37.7px;top:448.2px;font-size:7.79px;color:#b5dd78;">RA_Flatten_</div>
<div class="lb" style="left:-37.5px;top:457.4px;font-size:7.9px;color:#b5dd78;">Rock</div>
<div class="lb" style="left:-38.0px;top:500.4px;font-size:8.0px;color:#f0b08e;">Crease</div>
<div class="lb" style="left:-38.3px;top:547.5px;font-size:7.47px;color:#f0b08e;">RA_Slash</div>
<div class="lb" style="left:-37.8px;top:594.7px;font-size:7.97px;color:#f0b08e;">Crease UP</div>
<div class="lb" style="left:-38.0px;top:642.0px;font-size:8.3px;color:#9d9de6;">Move</div>
<div class="lb" style="left:-38.0px;top:689.0px;font-size:8.49px;color:#9d9de6;">Drag</div>
<div class="lb" style="left:-38.0px;top:736.0px;font-size:8.71px;color:#f2f2f2;">Smooth</div>
<div class="lb" style="left:-37.7px;top:783.7px;font-size:9.32px;color:#f2f2f2;">Inflate</div>
<div class="lb" style="left:-41.7px;top:853.5px;font-size:7.37px;color:#ddd;">35</div>
<div class="lb" style="left:-5.0px;top:853.5px;font-size:7.5px;color:#3c3c3c;">&#8211;</div>
<div class="lb" style="left:36.0px;top:853.5px;font-size:7.5px;color:#bbb;">&#8211;</div>
<div class="lb" style="left:69.2px;top:853.5px;font-size:7.44px;color:#f2f2f2;">Solo</div>
<div class="lb" style="left:106.2px;top:853.5px;font-size:6.84px;color:#f2f2f2;">X-Ray</div>
<div class="lb" style="left:143.0px;top:853.5px;font-size:7.77px;color:#f2f2f2;">Voxel</div>
<div class="lb" style="left:179.8px;top:853.5px;font-size:7.41px;color:#f2f2f2;">Grid</div>
<div class="lb" style="left:216.4px;top:853.5px;font-size:7.79px;color:#f2f2f2;">Wireframe</div>
<div class="lb" style="left:253.3px;top:853.5px;font-size:7.78px;color:#f2f2f2;">Inspector</div>
<div class="lb" style="left:290.0px;top:850.0px;font-size:7.54px;color:#f2f2f2;">Smooth</div>
<div class="lb" style="left:290.3px;top:858.5px;font-size:7.65px;color:#f2f2f2;">shading</div>
<div class="lb" style="left:327.4px;top:853.5px;font-size:7.54px;color:#f2f2f2;">Front</div>
<div class="lb" style="left:364.1px;top:853.5px;font-size:7.48px;color:#f2f2f2;">Connected</div>
<div class="lb" style="left:401.0px;top:853.5px;font-size:7.71px;color:#f2f2f2;">Silhouette</div>
<div class="lb" style="left:437.0px;top:850.0px;font-size:7.24px;color:#8d4a48;">Accumulate</div>
<div class="lb" style="left:437.9px;top:858.5px;font-size:7.82px;color:#8d4a48;">stroke</div>
<div class="lb" style="left:1101.7px;top:125.3px;font-size:8.25px;color:#df5f58;">Sym</div>
<div class="lb" style="left:1101.7px;top:465.3px;font-size:9.16px;color:#f2f2f2;">Sub</div>
<div class="lb" style="left:1101.7px;top:514.0px;font-size:8.85px;color:#f2f2f2;">Smooth</div>
<div class="lb" style="left:1101.7px;top:558.2px;font-size:8.79px;color:#747474;">Mask</div>
<div class="lb" style="left:1101.7px;top:602.5px;font-size:9.0px;color:#9ccaea;">Hide</div>
<div class="lb" style="left:1101.7px;top:646.9px;font-size:9.0px;color:#dcdcdc;">Gizmo</div>
<div class="lb" style="left:14.5px;top:786.5px;font-size:8.81px;color:#16248c;font-weight:bold;letter-spacing:.3px;">Front</div>
</body></html>
